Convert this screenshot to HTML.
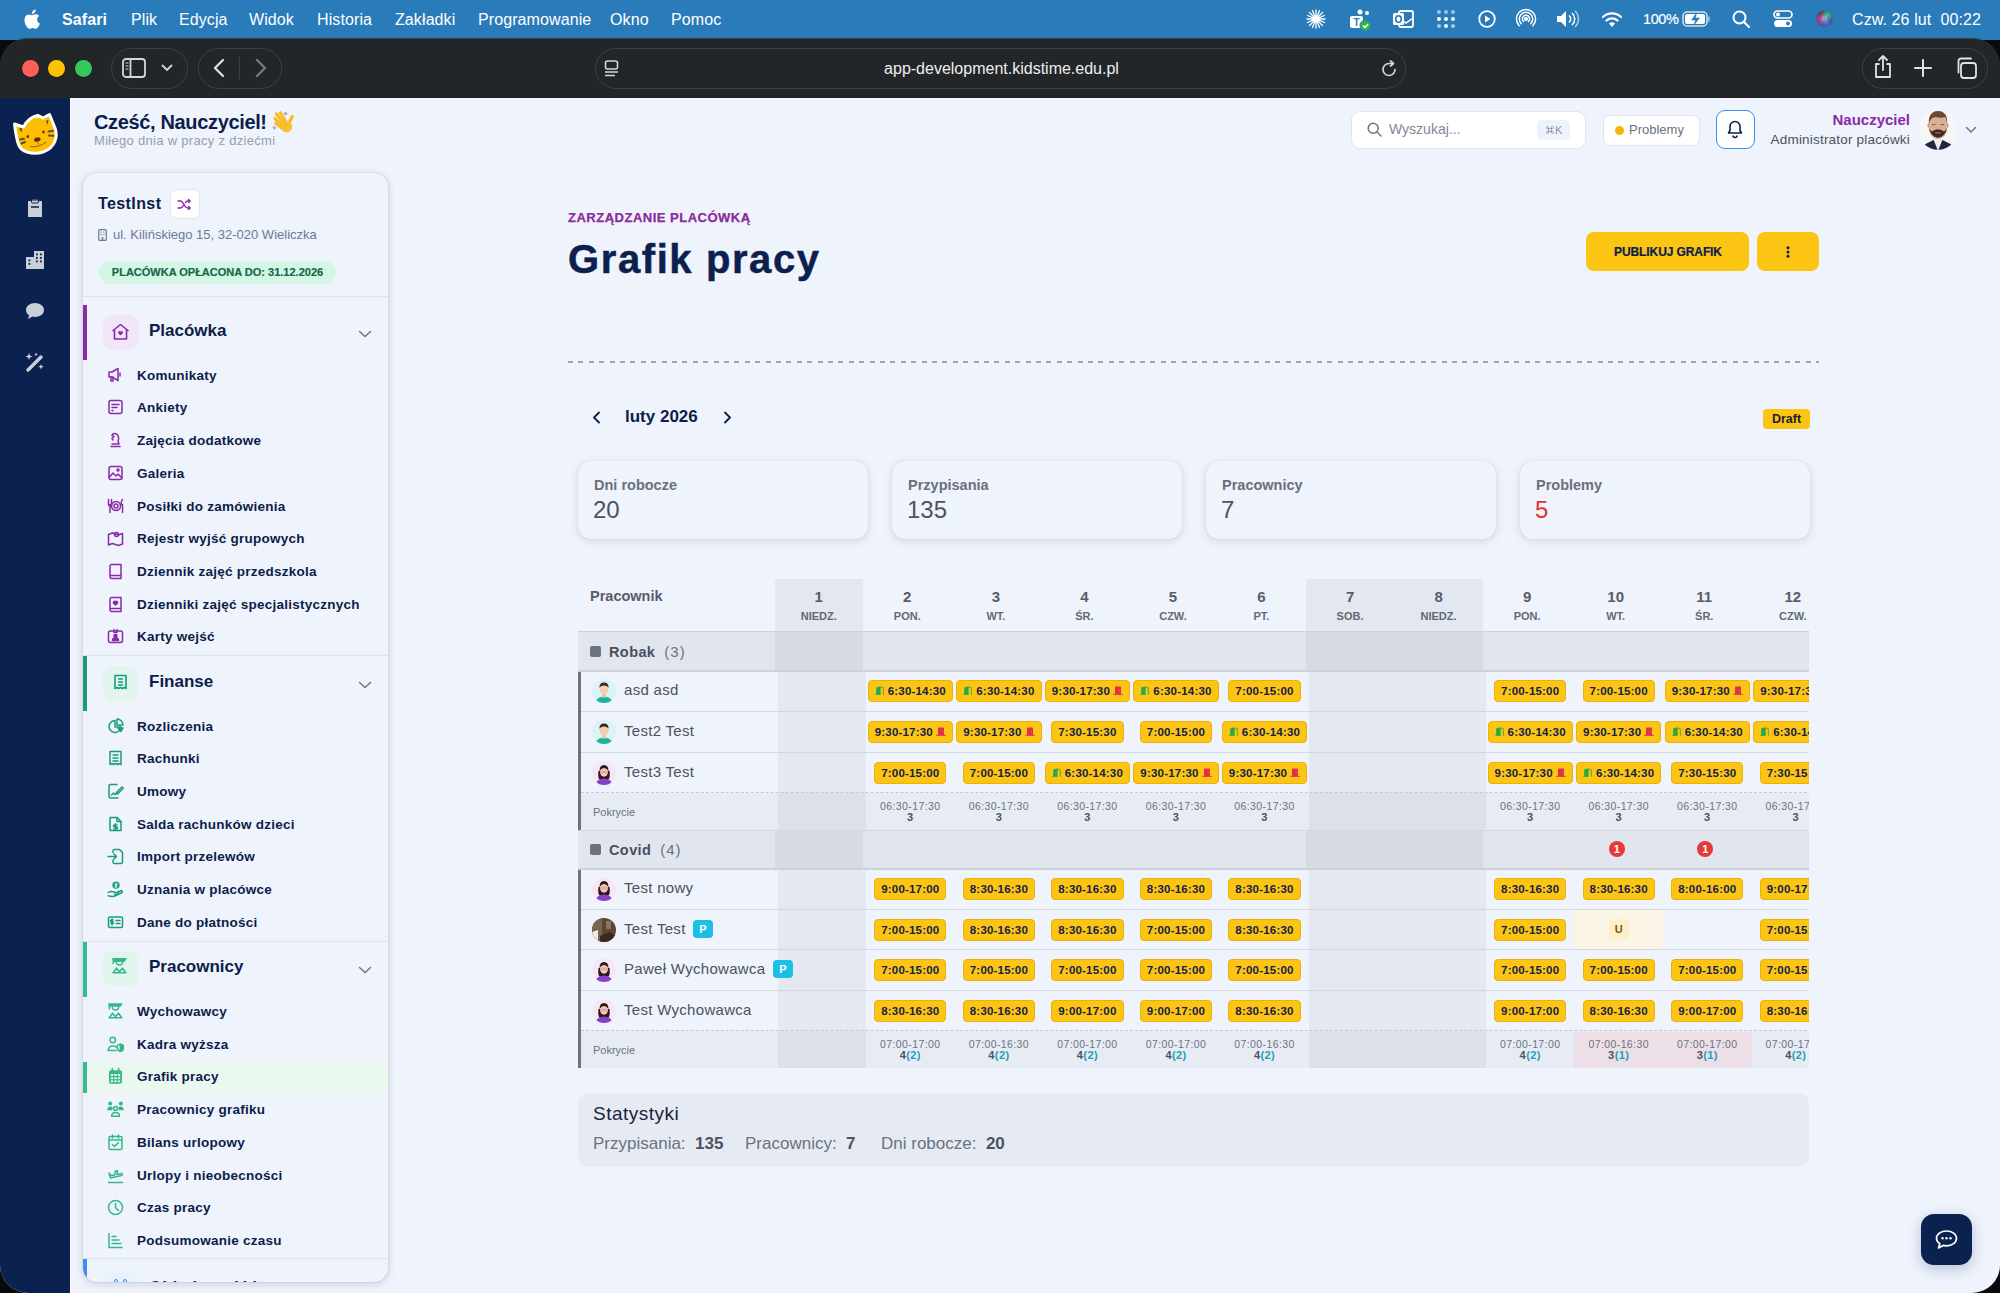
<!DOCTYPE html>
<html><head><meta charset="utf-8">
<style>
*{box-sizing:border-box;margin:0;padding:0}
html,body{width:2000px;height:1293px;overflow:hidden;background:#0a0a0a;font-family:"Liberation Sans",sans-serif}
.a{position:absolute}
svg{position:absolute;overflow:visible}
#menubar{position:absolute;left:0;top:0;width:2000px;height:40px;background:#2a7bba;color:#fff;font-size:16px}
#menubar span{position:absolute;top:11px;white-space:nowrap;letter-spacing:0.1px}
#toolbar{position:absolute;left:0;top:38px;width:2000px;height:60px;background:#232629;border-radius:28px 28px 0 0;border-top:1px solid #3a3d40}
.tl{position:absolute;width:16.5px;height:16.5px;border-radius:50%;top:60px;box-shadow:0 0 0 0.6px rgba(0,0,0,.35)}
.pill{position:absolute;top:48px;height:41px;border:1.5px solid #3a4045;border-radius:21px}
#content{position:absolute;left:0;top:98px;width:2000px;height:1195px;background:#eff3fc;border-radius:0 0 28px 28px;overflow:hidden}
#rail{position:absolute;left:0;top:0;width:71px;height:1195px;background:#0b2150;border-right:1px solid #fff}
.navy{color:#0c1d4a}
</style></head>
<body>
<div id="menubar">
  <svg style="left:23px;top:9px" width="17" height="20" viewBox="0 0 17 20"><path fill="#fff" d="M14.1 10.6c0-2.3 1.9-3.4 2-3.5-1.1-1.6-2.8-1.8-3.4-1.8-1.4-.1-2.8.9-3.5.9-.7 0-1.8-.8-3-.8C4.6 5.4 3.1 6.3 2.3 7.7c-1.7 2.9-.4 7.2 1.2 9.6.8 1.2 1.8 2.5 3 2.4 1.2 0 1.7-.8 3.1-.8 1.5 0 1.9.8 3.1.8 1.3 0 2.1-1.2 2.9-2.4.9-1.3 1.3-2.6 1.3-2.700-.1 0-2.8-1-2.8-4zM11.7 3.6c.7-.8 1.1-1.9 1-3-.9 0-2.1.6-2.8 1.4-.6.7-1.200 1.800-1 2.900 1.100.1 2.100-.500 2.800-1.300z"/></svg>
  <span style="left:62px;font-weight:bold">Safari</span>
  <span style="left:131px">Plik</span>
  <span style="left:179px">Edycja</span>
  <span style="left:249px">Widok</span>
  <span style="left:317px">Historia</span>
  <span style="left:395px">Zakładki</span>
  <span style="left:478px">Programowanie</span>
  <span style="left:610px">Okno</span>
  <span style="left:671px">Pomoc</span>
  <!-- status icons -->
  <svg style="left:1306px;top:9px" width="20" height="20" viewBox="0 0 20 20"><path d="M12.50 10.00L19.20 10.00M12.31 10.96L18.50 13.52M11.77 11.77L16.51 16.51M10.96 12.31L13.52 18.50M10.00 12.50L10.00 19.20M9.04 12.31L6.48 18.50M8.23 11.77L3.49 16.51M7.69 10.96L1.50 13.52M7.50 10.00L0.80 10.00M7.69 9.04L1.50 6.48M8.23 8.23L3.49 3.49M9.04 7.69L6.48 1.50M10.00 7.50L10.00 0.80M10.96 7.69L13.52 1.50M11.77 8.23L16.51 3.49M12.31 9.04L18.50 6.48" stroke="#fff" stroke-width="1.3" stroke-linecap="round"/><circle cx="10" cy="10" r="3" fill="#fff"/></svg>
  <svg style="left:1349px;top:8px" width="24" height="24" viewBox="0 0 24 24"><rect x="1" y="8" width="13" height="12" rx="2" fill="#fff"/><text x="4.5" y="18" font-size="10" font-weight="bold" fill="#2a7bba" font-family="Liberation Sans">T</text><circle cx="11" cy="4" r="2.5" fill="#fff"/><circle cx="18" cy="5" r="2" fill="#fff"/><circle cx="16.5" cy="17.5" r="5.5" fill="#2fb34a" stroke="#2a7bba" stroke-width="1"/><path d="M14 17.5l2 2 3.2-3.5" stroke="#fff" stroke-width="1.6" fill="none"/></svg>
  <svg style="left:1392px;top:8px" width="22" height="22" viewBox="0 0 22 22"><rect x="7" y="3" width="14" height="16" rx="1.5" fill="none" stroke="#fff" stroke-width="1.8"/><path d="M7 10l7 5 7-5" stroke="#fff" stroke-width="1.5" fill="none"/><rect x="1" y="5" width="11" height="12" rx="1.5" fill="#fff"/><ellipse cx="6.5" cy="11" rx="2.8" ry="3.3" fill="none" stroke="#2a7bba" stroke-width="1.6"/></svg>
  <svg style="left:1436px;top:9px" width="20" height="20" viewBox="0 0 20 20"><g fill="#fff"><circle cx="3" cy="3" r="2" opacity=".55"/><circle cx="10" cy="3" r="2" opacity=".55"/><circle cx="17" cy="3" r="2" opacity=".55"/><circle cx="3" cy="10" r="2"/><circle cx="10" cy="10" r="2"/><circle cx="17" cy="10" r="2"/><circle cx="3" cy="17" r="2" opacity=".6"/><circle cx="10" cy="17" r="2"/><circle cx="17" cy="17" r="2" opacity=".6"/></g></svg>
  <svg style="left:1478px;top:10px" width="18" height="18" viewBox="0 0 18 18"><circle cx="9" cy="9" r="7.8" fill="none" stroke="#fff" stroke-width="1.8"/><path d="M7 5.5v7l5.5-3.5z" fill="#fff"/></svg>
  <svg style="left:1517px;top:10px" width="18" height="18" viewBox="0 0 18 18"><g fill="none" stroke="#fff" stroke-width="1.5" stroke-linecap="round"><circle cx="9" cy="9" r="1.3" fill="#fff"/><path d="M6.5 11.5a3.6 3.6 0 1 1 5 0"/><path d="M4.3 13.7a6.7 6.7 0 1 1 9.4 0"/><path d="M2.2 15.8a9.6 9.6 0 1 1 13.6 0"/></g></svg>
  <svg style="left:1556px;top:10px" width="24" height="18" viewBox="0 0 24 18"><path d="M1 6h4l5-5v16l-5-5H1z" fill="#fff"/><g fill="none" stroke="#fff" stroke-width="1.6"><path d="M13 5.5a4.5 4.5 0 0 1 0 7"/><path d="M16 3a8 8 0 0 1 0 12"/><path d="M19 1a11 11 0 0 1 0 16" opacity=".6"/></g></svg>
  <svg style="left:1600px;top:10px" width="24" height="18" viewBox="0 0 24 18"><path d="M12 17l3-3.5a4.5 4.5 0 0 0-6 0z" fill="#fff"/><g fill="none" stroke="#fff" stroke-width="2.2" stroke-linecap="round"><path d="M6.5 10.5a8 8 0 0 1 11 0"/><path d="M3 7a13 13 0 0 1 18 0"/></g></svg>
  <span style="left:1643px;font-size:14.5px;letter-spacing:-0.4px;-webkit-text-stroke:0.2px #fff">100%</span>
  <svg style="left:1682px;top:11px" width="30" height="16" viewBox="0 0 30 16"><rect x="1" y="1" width="24" height="14" rx="4" fill="none" stroke="#fff" stroke-width="1.5" opacity=".8"/><rect x="3" y="3" width="20" height="10" rx="2" fill="#fff"/><path d="M27 5.5v5" stroke="#fff" stroke-width="1.5" opacity=".6"/><path d="M14.5 2l-5 7h4l-1.5 5 5.5-7h-4z" fill="#2a7bba" stroke="#2a7bba" stroke-width="0.5"/></svg>
  <svg style="left:1732px;top:10px" width="18" height="18" viewBox="0 0 18 18"><circle cx="7.5" cy="7.5" r="6" fill="none" stroke="#fff" stroke-width="2"/><path d="M12 12l5 5" stroke="#fff" stroke-width="2.2" stroke-linecap="round"/></svg>
  <svg style="left:1773px;top:10px" width="20" height="18" viewBox="0 0 20 18"><rect x="1" y="1" width="18" height="7" rx="3.5" fill="none" stroke="#fff" stroke-width="1.7"/><circle cx="5" cy="4.5" r="2" fill="#fff"/><rect x="1" y="10" width="18" height="7" rx="3.5" fill="#fff"/><circle cx="15" cy="13.5" r="2" fill="#2a7bba"/></svg>
  <svg style="left:1816px;top:10px" width="17" height="17" viewBox="0 0 17 17"><defs><radialGradient id="sg1" cx="30%" cy="55%" r="55%"><stop offset="0" stop-color="#e0409a"/><stop offset="1" stop-color="#e0409a" stop-opacity="0"/></radialGradient><radialGradient id="sg2" cx="70%" cy="30%" r="50%"><stop offset="0" stop-color="#40c890"/><stop offset="1" stop-color="#40c890" stop-opacity="0"/></radialGradient><radialGradient id="sg3" cx="60%" cy="75%" r="45%"><stop offset="0" stop-color="#4a7ae8"/><stop offset="1" stop-color="#4a7ae8" stop-opacity="0"/></radialGradient></defs><circle cx="8.5" cy="8.5" r="8" fill="#3a3550"/><circle cx="8.5" cy="8.5" r="8" fill="url(#sg1)"/><circle cx="8.5" cy="8.5" r="8" fill="url(#sg2)"/><circle cx="8.5" cy="8.5" r="8" fill="url(#sg3)"/><circle cx="8.5" cy="8.5" r="3" fill="#dde" opacity=".35"/></svg>
  <span style="left:1852px">Czw. 26 lut&nbsp; 00:22</span>
</div>
<div id="toolbar"></div>
<div class="tl" style="left:22px;background:#fe5f57"></div>
<div class="tl" style="left:48px;background:#fcc400"></div>
<div class="tl" style="left:75px;background:#35c759"></div>
<div class="pill" style="left:111px;width:77px"></div>
<svg style="left:122px;top:58px" width="24" height="20" viewBox="0 0 24 20"><rect x="1" y="1" width="22" height="18" rx="3" fill="none" stroke="#d5d7d9" stroke-width="1.8"/><path d="M8.5 1v18" stroke="#d5d7d9" stroke-width="1.8"/><path d="M3.5 5h3M3.5 8h3M3.5 11h3" stroke="#d5d7d9" stroke-width="1.2"/></svg>
<svg style="left:161px;top:64px" width="12" height="8" viewBox="0 0 12 8"><path d="M1.5 1.5l4.5 4.5 4.5-4.5" fill="none" stroke="#d5d7d9" stroke-width="1.8" stroke-linecap="round"/></svg>
<div class="pill" style="left:198px;width:84px"></div>
<svg style="left:213px;top:58px" width="12" height="20" viewBox="0 0 12 20"><path d="M10 2L2 10l8 8" fill="none" stroke="#e0e2e4" stroke-width="2.2" stroke-linecap="round" stroke-linejoin="round"/></svg>
<div class="a" style="left:239px;top:57px;width:1px;height:22px;background:#3a4045"></div>
<svg style="left:255px;top:58px" width="12" height="20" viewBox="0 0 12 20"><path d="M2 2l8 8-8 8" fill="none" stroke="#7a7d80" stroke-width="2.2" stroke-linecap="round" stroke-linejoin="round"/></svg>
<div class="pill" style="left:595px;width:811px"></div>
<svg style="left:604px;top:60px" width="16" height="17" viewBox="0 0 16 17"><rect x="1.5" y="1" width="12" height="8" rx="2" fill="none" stroke="#d5d7d9" stroke-width="1.6"/><path d="M1 12h13M1 15.5h10" stroke="#d5d7d9" stroke-width="1.6"/></svg>
<div class="a" style="left:0;width:2000px;text-align:center;top:60px;font-size:16px;color:#eceeef;padding-left:3px">app-development.kidstime.edu.pl</div>
<svg style="left:1380px;top:60px" width="18" height="18" viewBox="0 0 18 18"><path d="M15 9.5A6 6 0 1 1 9 3.5h3" fill="none" stroke="#d5d7d9" stroke-width="1.7" stroke-linecap="round"/><path d="M10.5 1l3 2.5-3 2.5" fill="none" stroke="#d5d7d9" stroke-width="1.7" stroke-linecap="round" stroke-linejoin="round"/></svg>
<div class="pill" style="left:1862px;width:126px"></div>
<svg style="left:1873px;top:55px" width="20" height="24" viewBox="0 0 20 24"><path d="M10 1v14M6 5l4-4 4 4" fill="none" stroke="#e0e2e4" stroke-width="1.8" stroke-linecap="round" stroke-linejoin="round"/><path d="M6.5 9H3v13h14V9h-3.5" fill="none" stroke="#e0e2e4" stroke-width="1.8" stroke-linejoin="round"/></svg>
<svg style="left:1914px;top:59px" width="18" height="18" viewBox="0 0 18 18"><path d="M9 1v16M1 9h16" stroke="#e0e2e4" stroke-width="2" stroke-linecap="round"/></svg>
<svg style="left:1955px;top:57px" width="22" height="22" viewBox="0 0 22 22"><rect x="6" y="6" width="15" height="15" rx="3" fill="none" stroke="#e0e2e4" stroke-width="1.8"/><path d="M3.5 15.5V4a2.5 2.5 0 0 1 2.5-2.5h10" fill="none" stroke="#e0e2e4" stroke-width="1.8" stroke-linecap="round"/></svg>

<div id="content">
  <div id="rail"></div>
</div>
<!-- rail icons (page coords) -->
<svg style="left:5px;top:105px" width="60" height="60" viewBox="0 0 60 60">
  <path d="M9.5 19 L18.5 22 Q24 12 32.5 10.5 L35 11.5 L38 13 L44.5 9.5 L50 23 Q52.5 30 50 36 Q47 44 38 47 Q30 49.5 22 47 Q15 45 13 38 Q11 31 9.5 19z" fill="#fdbd00" stroke="#fff" stroke-width="3" stroke-linejoin="round"/>
  <path d="M14 23.5l2.5 4 .8-4.5z" fill="#5a5030"/>
  <path d="M41 15.5l1.5 4.5 1-4.8z" fill="#5a5030"/>
  <path d="M43.5 26.5l4.5-.8M44 30.5l4.3.2" stroke="#5a5030" stroke-width="2" stroke-linecap="round"/>
  <path d="M15 34.5l4-.8M16.5 38.5l3.5-1.5" stroke="#5a5030" stroke-width="2" stroke-linecap="round"/>
  <ellipse cx="22.8" cy="31.5" rx="1.2" ry="1.6" fill="#5a2a10"/>
  <ellipse cx="38.5" cy="27" rx="1.2" ry="1.6" fill="#5a2a10"/>
  <ellipse cx="32.3" cy="34.5" rx="3.3" ry="2.1" fill="#5a2a10" transform="rotate(-12 32.3 34.5)"/>
  <path d="M25 41.5 Q33 43 41.5 37" stroke="#8a5a10" stroke-width="0.9" fill="none"/>
  <path d="M33 36.5v3.5" stroke="#8a5a10" stroke-width="0.7"/>
  <path d="M31 13.5l1.5-2.5 1 2.5" stroke="#fff" stroke-width="1" fill="none" opacity=".8"/>
</svg>
<svg style="left:26px;top:198px" width="18" height="20" viewBox="0 0 18 20"><path d="M2 3h4V1.5h6V3h4v16H2z" fill="#c9ced9"/><rect x="5.5" y="2" width="7" height="3" rx="1" fill="#c9ced9" stroke="#0b2150" stroke-width="1"/><path d="M5 9h8" stroke="#0b2150" stroke-width="1.5"/></svg>
<svg style="left:25px;top:250px" width="20" height="20" viewBox="0 0 20 20"><path d="M1 7h8V1h10v18H1z" fill="#c9ced9"/><g fill="#0b2150"><rect x="11" y="3.5" width="1.8" height="1.8"/><rect x="15" y="3.5" width="1.8" height="1.8"/><rect x="11" y="7" width="1.8" height="1.8"/><rect x="15" y="7" width="1.8" height="1.8"/><rect x="11" y="10.5" width="1.8" height="1.8"/><rect x="15" y="10.5" width="1.8" height="1.8"/><rect x="3.5" y="9.5" width="1.8" height="1.8"/><rect x="3.5" y="13" width="1.8" height="1.8"/></g></svg>
<svg style="left:25px;top:302px" width="20" height="18" viewBox="0 0 20 18"><path d="M10 1C5 1 1 4 1 8c0 2.2 1.1 4 3 5.3L3.2 17 7.5 14.6C8.3 14.8 9.1 15 10 15c5 0 9-3 9-7s-4-7-9-7z" fill="#c9ced9"/></svg>
<svg style="left:24px;top:351px" width="22" height="22" viewBox="0 0 22 22"><path d="M4 19L17 6" stroke="#c9ced9" stroke-width="3.5" stroke-linecap="round"/><path d="M5 2l1 2.5L8.5 5.5 6 6.5 5 9 4 6.5 1.5 5.5 4 4.5z" fill="#c9ced9"/><path d="M17 13l.8 2 2 .8-2 .8-.8 2-.8-2-2-.8 2-.8z" fill="#c9ced9"/><path d="M12 1.5l.6 1.4 1.4.6-1.4.6-.6 1.4-.6-1.4-1.4-.6 1.4-.6z" fill="#c9ced9"/></svg>
<!-- header greeting -->
<div class="a navy" style="left:94px;top:111px;font-size:20px;font-weight:bold;white-space:nowrap;letter-spacing:-0.35px">Cześć, Nauczyciel!</div>
<svg style="left:270px;top:110px" width="24" height="24" viewBox="0 0 24 24"><g stroke="#f7bd26" stroke-linecap="round"><path d="M14.5 14.5L6.4 4" stroke-width="3.2"/><path d="M16.5 12.5L10.3 2.8" stroke-width="3.2"/><path d="M13 16.5L4.9 8.6" stroke-width="3.2"/><path d="M12.5 18.5L5.7 13.4" stroke-width="3"/><path d="M18 15L22.3 6.5" stroke-width="3.2"/></g><ellipse cx="16.8" cy="17" rx="5.6" ry="5.2" transform="rotate(-40 16.8 17)" fill="#f8c02a"/><g stroke="#8a8f99" stroke-width="1.1" stroke-linecap="round"><path d="M14.3 3.2l1.2 1.6M15.7 2.4l1.2 1.6"/><path d="M3.2 17.5l1.3 1.5M4.3 16.5l1.3 1.5"/></g></svg>
<div class="a" style="left:94px;top:133px;font-size:13px;color:#979dab;white-space:nowrap;letter-spacing:0.3px">Miłego dnia w pracy z dziećmi</div>


<div class="a" style="left:1351px;top:111px;width:235px;height:38px;background:#fff;border:1px solid #dfe4ee;border-radius:9px"></div>
<svg style="left:1367px;top:122px" width="15" height="15" viewBox="0 0 15 15"><circle cx="6.2" cy="6.2" r="5" fill="none" stroke="#6b7488" stroke-width="1.5"/><path d="M10 10l4 4" stroke="#6b7488" stroke-width="1.5" stroke-linecap="round"/></svg>
<div class="a" style="left:1389px;top:121px;font-size:14px;color:#7f889b;white-space:nowrap">Wyszukaj...</div>
<div class="a" style="left:1537px;top:120px;width:33px;height:20px;background:#eef2fa;border-radius:5px;font-size:11px;color:#8a93a6;line-height:20px;padding-left:18px">K</div>
<svg style="left:1545px;top:125px" width="10" height="10" viewBox="0 0 10 10"><path d="M3.5 3.5h3v3h-3zM3.5 3.5v-1a1 1 0 1 0-1 1zM6.5 3.5v-1a1 1 0 1 1 1 1zM3.5 6.5v1a1 1 0 1 1-1-1zM6.5 6.5v1a1 1 0 1 0 1-1z" fill="none" stroke="#8a93a6" stroke-width=".9"/></svg>
<div class="a" style="left:1603px;top:115px;width:97px;height:31px;background:#fff;border:1px solid #dfe4ee;border-radius:7px"></div>
<div class="a" style="left:1615px;top:126px;width:9px;height:9px;border-radius:50%;background:#f2b50a"></div>
<div class="a" style="left:1629px;top:122px;font-size:13px;color:#6b7280;white-space:nowrap">Problemy</div>
<div class="a" style="left:1716px;top:110px;width:39px;height:39px;background:#fff;border:1.5px solid #3d8ef0;border-radius:9px"></div>
<svg style="left:1727px;top:120px" width="16" height="18" viewBox="0 0 16 18"><path d="M8 1.5a5 5 0 0 0-5 5v4L1.5 13h13L13 10.5v-4a5 5 0 0 0-5-5z" fill="none" stroke="#0c1d4a" stroke-width="1.6" stroke-linejoin="round"/><path d="M6 15.5a2 2 0 0 0 4 0" fill="none" stroke="#0c1d4a" stroke-width="1.6"/></svg>
<div class="a" style="left:1700px;width:210px;text-align:right;top:111px;font-size:15px;font-weight:bold;color:#8a2aa8;white-space:nowrap">Nauczyciel</div>
<div class="a" style="left:1700px;width:210px;text-align:right;top:132px;font-size:13.5px;color:#4b5260;white-space:nowrap;letter-spacing:0.2px">Administrator placówki</div>
<svg style="left:1918px;top:110px" width="40" height="40" viewBox="0 0 40 40"><defs><clipPath id="avc"><circle cx="20" cy="20" r="19.7"/></clipPath></defs><g clip-path="url(#avc)"><rect width="40" height="40" fill="#f6f6f7"/><path d="M4 40l3.5-6 8-4h9l8 4 3.5 6z" fill="#1f2740"/><path d="M15.5 29.5h9L20 41z" fill="#f1ecea"/><ellipse cx="10.8" cy="15.5" rx="1.3" ry="2.3" fill="#c99479"/><ellipse cx="29.2" cy="15.5" rx="1.3" ry="2.3" fill="#c99479"/><path d="M11 12c0-7 3.5-10.5 9-10.5s9 3.5 9 10.5v6c0 6-3.5 11-9 11s-9-5-9-11z" fill="#dcae93"/><path d="M10.8 13.5c-.3-8 3-12.6 9.2-12.6 6.5 0 9.6 4.6 9.2 12.6-.8-3.2-1.3-5.5-2.2-6.5-2 .8-5.5 1-8.5.3-2.8-.6-4.8.6-5.8 2.200-.8 1.300-1.500 2.500-1.900 4z" fill="#6a4a34"/><path d="M11.2 17.5c.2 2.600.800 4.600 2.300 6.600 1.300 1.800 3.700 3.600 6.500 3.600s5.200-1.800 6.500-3.600c1.500-2 2.100-4 2.300-6.600-.600 2.200-1.500 3.500-3 3.900-1.500-1.300-3.500-1.800-5.800-1.800s-4.300.500-5.800 1.800c-1.500-.400-2.400-1.700-3-3.900z" fill="#3b2a1f"/><path d="M17.3 22.6q2.700.9 5.400 0" stroke="#b9837a" stroke-width="1" fill="none"/><path d="M14 14.6h3.400M22.600 14.600h3.400" stroke="#6a5040" stroke-width=".9"/></g></svg>
<svg style="left:1965px;top:126px" width="12" height="8" viewBox="0 0 12 8"><path d="M1.5 1.5l4.5 4.5 4.5-4.5" fill="none" stroke="#6b7488" stroke-width="1.5" stroke-linecap="round"/></svg>

<div class="a" style="left:83px;top:173px;width:305px;height:1109px;background:#eff3fc;border-radius:14px;box-shadow:0 2px 9px rgba(30,40,80,.17), 0 0 2px rgba(30,40,80,.2);overflow:hidden">
<div class="a" style="left:0;top:123px;width:305px;height:1px;background:#dde2ec"></div>
<div class="a" style="left:0;top:482px;width:305px;height:1px;background:#dde2ec"></div>
<div class="a" style="left:0;top:768px;width:305px;height:1px;background:#dde2ec"></div>
<div class="a" style="left:0;top:1085px;width:305px;height:1px;background:#dde2ec"></div>
<div class="a" style="left:0;top:132px;width:4px;height:55px;background:#8a2aa8"></div>
<div class="a" style="left:0;top:483px;width:4px;height:55px;background:#199a78"></div>
<div class="a" style="left:0;top:769px;width:4px;height:55px;background:#34bb8a"></div>
<div class="a" style="left:0;top:889px;width:305px;height:31px;background:#eaf8f0"></div>
<div class="a" style="left:0;top:889px;width:4px;height:31px;background:#34bb8a"></div>
<div class="a" style="left:0;top:1086px;width:4px;height:30px;background:#3b8ef0"></div>
<div class="a" style="left:20px;top:1098px;width:35px;height:35px;background:#e6f2fd;border-radius:9px"></div>
<div class="a" style="left:66px;top:1105px;font-size:17px;font-weight:bold;color:#0c1d4a;white-space:nowrap">Obiady wyjść</div><div class="a" style="left:31px;top:1106px;width:4px;height:4px;border-radius:50%;border:1.3px solid #3b8ef0"></div><div class="a" style="left:40px;top:1106px;width:4px;height:4px;border-radius:50%;border:1.3px solid #3b8ef0"></div>
</div>


<div class="a" style="left:98px;top:195px;font-size:16px;font-weight:bold;color:#0c1d4a;white-space:nowrap;letter-spacing:0.4px">TestInst</div>
<div class="a" style="left:170px;top:189px;width:30px;height:30px;background:#fff;border:1px solid #e3e6ee;border-radius:7px"></div>
<svg style="left:177px;top:198px" width="15" height="13" viewBox="0 0 15 13"><g fill="none" stroke="#8a2aa8" stroke-width="1.4" stroke-linecap="round" stroke-linejoin="round"><path d="M1 3h2.5c3 0 4 7 7 7H13"/><path d="M1 10h2.5c1.4 0 2.3-1.3 3-2.8M8.5 4.5C9 3.8 9.6 3 10.5 3H13"/><path d="M11.5 1.5L13 3l-1.5 1.5M11.5 8.5L13 10l-1.5 1.5"/></g></svg>
<svg style="left:98px;top:229px" width="9" height="12" viewBox="0 0 9 12"><rect x="0.7" y="0.7" width="7.6" height="10.6" rx="1" fill="none" stroke="#6b7a99" stroke-width="1.2"/><g fill="#6b7a99"><rect x="2.3" y="2.5" width="1.2" height="1.2"/><rect x="5.3" y="2.5" width="1.2" height="1.2"/><rect x="2.3" y="5" width="1.2" height="1.2"/><rect x="5.3" y="5" width="1.2" height="1.2"/><rect x="3.7" y="8" width="1.6" height="3.3"/></g></svg>
<div class="a" style="left:113px;top:227px;font-size:13px;color:#6b7a99;white-space:nowrap">ul. Kilińskiego 15, 32-020 Wieliczka</div>
<div class="a" style="left:99px;top:261px;width:237px;height:23px;background:#d4f6e4;border-radius:12px;font-size:11px;font-weight:bold;color:#146b45;line-height:23px;text-align:center;white-space:nowrap;-webkit-text-stroke:0.2px #146b45">PLACÓWKA OPŁACONA DO: 31.12.2026</div>

<div class="a" style="left:103px;top:315px;width:35px;height:35px;background:#f3e5f8;border-radius:9px"></div>
<svg style="left:111px;top:323px" width="19" height="18" viewBox="0 0 19 18"><g fill="none" stroke="#8a2aa8" stroke-width="1.6" stroke-linejoin="round"><path d="M1.5 8L9.5 1.5 17.5 8"/><path d="M3.5 6.5V16h12V6.5"/></g><path d="M9.5 12.5l-2.3-2.2a1.3 1.3 0 0 1 2.3-1.5 1.3 1.3 0 0 1 2.3 1.5z" fill="#8a2aa8"/></svg>
<div class="a" style="left:149px;top:321px;font-size:17px;font-weight:bold;color:#0c1d4a;white-space:nowrap">Placówka</div>
<svg style="left:358px;top:330px" width="14" height="8" viewBox="0 0 14 8"><path d="M1.5 1.5l5.5 5 5.5-5" fill="none" stroke="#6b7488" stroke-width="1.5" stroke-linecap="round"/></svg>
<svg style="left:107px;top:367px" width="17" height="16" viewBox="0 0 17 16"><g fill="none" stroke="#8a2aa8" stroke-width="1.5" stroke-linecap="round" stroke-linejoin="round"><path d="M2 5h3l6-3.5v12L5 10H2z"/><path d="M4 10v4h2v-4"/><path d="M13 6v3"/></g></svg>
<div class="a" style="left:137px;top:368px;font-size:13.5px;font-weight:bold;color:#0c1d4a;white-space:nowrap;letter-spacing:0.25px">Komunikaty</div>
<svg style="left:107px;top:399px" width="17" height="16" viewBox="0 0 17 16"><g fill="none" stroke="#8a2aa8" stroke-width="1.5" stroke-linecap="round" stroke-linejoin="round"><rect x="2" y="1.5" width="13" height="13" rx="2"/><path d="M5 5.5h7M5 8.5h5M5 11.5h1"/></g></svg>
<div class="a" style="left:137px;top:400px;font-size:13.5px;font-weight:bold;color:#0c1d4a;white-space:nowrap;letter-spacing:0.25px">Ankiety</div>
<svg style="left:107px;top:432px" width="17" height="16" viewBox="0 0 17 16"><g fill="none" stroke="#8a2aa8" stroke-width="1.5" stroke-linecap="round" stroke-linejoin="round"><path d="M4 14.5h9M5 12h7l-1-3c1.5-2 .5-7-3-7.5-2-.2-3 1-3 2l2 1-2 2 1 1.5"/></g></svg>
<div class="a" style="left:137px;top:433px;font-size:13.5px;font-weight:bold;color:#0c1d4a;white-space:nowrap;letter-spacing:0.25px">Zajęcia dodatkowe</div>
<svg style="left:107px;top:465px" width="17" height="16" viewBox="0 0 17 16"><g fill="none" stroke="#8a2aa8" stroke-width="1.5" stroke-linecap="round" stroke-linejoin="round"><rect x="2" y="1.5" width="13" height="13" rx="2"/><path d="M2.5 12l3.5-4 3 3 2-2 3.5 3.5"/><circle cx="11" cy="5" r="1"/></g></svg>
<div class="a" style="left:137px;top:466px;font-size:13.5px;font-weight:bold;color:#0c1d4a;white-space:nowrap;letter-spacing:0.25px">Galeria</div>
<svg style="left:107px;top:498px" width="17" height="16" viewBox="0 0 17 16"><g fill="none" stroke="#8a2aa8" stroke-width="1.5" stroke-linecap="round" stroke-linejoin="round"><circle cx="9" cy="8" r="4.5"/><circle cx="9" cy="8" r="2"/><path d="M1.5 1.5v5a1.5 1.5 0 0 0 3 0v-5M3 6.5v8M15.5 1.5c-1 1-1.5 3-1.5 5h1.5v8"/></g></svg>
<div class="a" style="left:137px;top:499px;font-size:13.5px;font-weight:bold;color:#0c1d4a;white-space:nowrap;letter-spacing:0.25px">Posiłki do zamówienia</div>
<svg style="left:107px;top:530px" width="17" height="16" viewBox="0 0 17 16"><g fill="none" stroke="#8a2aa8" stroke-width="1.5" stroke-linecap="round" stroke-linejoin="round"><path d="M1.5 4.5l4-1.5 6 2 4-1.5v10.5l-4 1.5-6-2-4 1.5z"/><circle cx="9.5" cy="4.5" r="2"/></g></svg>
<div class="a" style="left:137px;top:531px;font-size:13.5px;font-weight:bold;color:#0c1d4a;white-space:nowrap;letter-spacing:0.25px">Rejestr wyjść grupowych</div>
<svg style="left:107px;top:563px" width="17" height="16" viewBox="0 0 17 16"><g fill="none" stroke="#8a2aa8" stroke-width="1.5" stroke-linecap="round" stroke-linejoin="round"><path d="M3 13V3a1.5 1.5 0 0 1 1.5-1.5H14v11H4.5A1.5 1.5 0 0 0 3 14a1.5 1.5 0 0 0 1.5 1.5H14v-3"/></g></svg>
<div class="a" style="left:137px;top:564px;font-size:13.5px;font-weight:bold;color:#0c1d4a;white-space:nowrap;letter-spacing:0.25px">Dziennik zajęć przedszkola</div>
<svg style="left:107px;top:596px" width="17" height="16" viewBox="0 0 17 16"><g fill="none" stroke="#8a2aa8" stroke-width="1.5" stroke-linecap="round" stroke-linejoin="round"><path d="M3 13V3a1.5 1.5 0 0 1 1.5-1.5H14v11H4.5A1.5 1.5 0 0 0 3 14a1.5 1.5 0 0 0 1.5 1.5H14v-3"/><path d="M8.5 9l-2-1.8a1.1 1.1 0 0 1 2-1.2 1.1 1.1 0 0 1 2 1.2z" fill="#8a2aa8"/></g></svg>
<div class="a" style="left:137px;top:597px;font-size:13.5px;font-weight:bold;color:#0c1d4a;white-space:nowrap;letter-spacing:0.25px">Dzienniki zajęć specjalistycznych</div>
<svg style="left:107px;top:628px" width="17" height="16" viewBox="0 0 17 16"><g fill="none" stroke="#8a2aa8" stroke-width="1.5" stroke-linecap="round" stroke-linejoin="round"><rect x="1.5" y="3" width="14" height="11.5" rx="2"/><path d="M7 1.5v3h3v-3"/><circle cx="8.5" cy="8" r="1.5" fill="#8a2aa8"/><path d="M5.5 12.5c0-1.6 1.3-2.5 3-2.5s3 .9 3 2.5z" fill="#8a2aa8"/></g></svg>
<div class="a" style="left:137px;top:629px;font-size:13.5px;font-weight:bold;color:#0c1d4a;white-space:nowrap;letter-spacing:0.25px">Karty wejść</div>
<div class="a" style="left:103px;top:666px;width:35px;height:35px;background:#e2f4ee;border-radius:9px"></div>
<svg style="left:112px;top:674px" width="17" height="17" viewBox="0 0 17 17"><g fill="none" stroke="#1b9d79" stroke-width="1.6" stroke-linejoin="round"><path d="M3 1.5h11v13l-1.8-1-1.8 1-1.9-1-1.8 1-1.9-1L3 14.5z"/><path d="M6 5h5M6 8h5M6 11h5"/></g></svg>
<div class="a" style="left:149px;top:672px;font-size:17px;font-weight:bold;color:#0c1d4a;white-space:nowrap">Finanse</div>
<svg style="left:358px;top:681px" width="14" height="8" viewBox="0 0 14 8"><path d="M1.5 1.5l5.5 5 5.5-5" fill="none" stroke="#6b7488" stroke-width="1.5" stroke-linecap="round"/></svg>
<svg style="left:107px;top:718px" width="17" height="16" viewBox="0 0 17 16"><g fill="none" stroke="#1b9d79" stroke-width="1.5" stroke-linecap="round" stroke-linejoin="round"><path d="M8 2.5A6 6 0 1 0 14 9H8z"/><path d="M10 1v6h6A6 6 0 0 0 10 1z"/><path d="M11 10l3 3.5 2-3.5z" fill="#1b9d79"/></g></svg>
<div class="a" style="left:137px;top:719px;font-size:13.5px;font-weight:bold;color:#0c1d4a;white-space:nowrap;letter-spacing:0.25px">Rozliczenia</div>
<svg style="left:107px;top:750px" width="17" height="16" viewBox="0 0 17 16"><g fill="none" stroke="#1b9d79" stroke-width="1.5" stroke-linecap="round" stroke-linejoin="round"><path d="M3 1.5h11v13l-1.8-1-1.8 1-1.9-1-1.8 1-1.9-1L3 14.5z"/><path d="M6 5h5M6 8h5M6 11h5"/></g></svg>
<div class="a" style="left:137px;top:751px;font-size:13.5px;font-weight:bold;color:#0c1d4a;white-space:nowrap;letter-spacing:0.25px">Rachunki</div>
<svg style="left:107px;top:783px" width="17" height="16" viewBox="0 0 17 16"><g fill="none" stroke="#1b9d79" stroke-width="1.5" stroke-linecap="round" stroke-linejoin="round"><path d="M10 1.5H3.5a1.5 1.5 0 0 0-1.5 1.5v10.5a1.5 1.5 0 0 0 1.5 1.5H11"/><path d="M4.5 12l2-2 1.5 1.5 2-2"/><path d="M9.5 9.5l5.5-5.5 1.3 1.3-5.5 5.5H9.5z"/></g></svg>
<div class="a" style="left:137px;top:784px;font-size:13.5px;font-weight:bold;color:#0c1d4a;white-space:nowrap;letter-spacing:0.25px">Umowy</div>
<svg style="left:107px;top:816px" width="17" height="16" viewBox="0 0 17 16"><g fill="none" stroke="#1b9d79" stroke-width="1.5" stroke-linecap="round" stroke-linejoin="round"><path d="M3 1.5h7l4 4v9H3z"/><path d="M10 1.5v4h4"/><path d="M10 9H7.5a1 1 0 0 0 0 2h2a1 1 0 0 1 0 2H7M8.5 7.8v6.5"/></g></svg>
<div class="a" style="left:137px;top:817px;font-size:13.5px;font-weight:bold;color:#0c1d4a;white-space:nowrap;letter-spacing:0.25px">Salda rachunków dzieci</div>
<svg style="left:107px;top:848px" width="17" height="16" viewBox="0 0 17 16"><g fill="none" stroke="#1b9d79" stroke-width="1.5" stroke-linecap="round" stroke-linejoin="round"><path d="M6 4.5V3a1.5 1.5 0 0 1 1.5-1.5h5l3 3v9.5a1.5 1.5 0 0 1-1.5 1.5h-6.5A1.5 1.5 0 0 1 6 13.5v-1.5"/><path d="M1 8.5h8.5M7 6l2.5 2.5L7 11"/></g></svg>
<div class="a" style="left:137px;top:849px;font-size:13.5px;font-weight:bold;color:#0c1d4a;white-space:nowrap;letter-spacing:0.25px">Import przelewów</div>
<svg style="left:107px;top:881px" width="17" height="16" viewBox="0 0 17 16"><g fill="none" stroke="#1b9d79" stroke-width="1.5" stroke-linecap="round" stroke-linejoin="round"><circle cx="9" cy="4.2" r="3.6" fill="#1b9d79" stroke="none"/><path d="M9 2.2v4M10.2 3H8.5a.8.8 0 0 0 0 1.5h1a.8.8 0 0 1 0 1.5H7.8" stroke="#eef3fc" stroke-width=".9"/><path d="M1.2 11.5c1.5-1 3-1.3 4.5-.8l2.8.8h2a1 1 0 0 1 0 2H7.5"/><path d="M1.2 14.8c2 .6 4 .8 6 .5l7.5-3.5a1.1 1.1 0 0 0-1-2L10.5 11.3"/></g></svg>
<div class="a" style="left:137px;top:882px;font-size:13.5px;font-weight:bold;color:#0c1d4a;white-space:nowrap;letter-spacing:0.25px">Uznania w placówce</div>
<svg style="left:107px;top:914px" width="17" height="16" viewBox="0 0 17 16"><g fill="none" stroke="#1b9d79" stroke-width="1.5" stroke-linecap="round" stroke-linejoin="round"><rect x="1.5" y="3" width="14" height="10.5" rx="1.5"/><path d="M9 6.5h4M9 9.5h4M6 6h-1.5a.9.9 0 0 0 0 1.8h1a.9.9 0 0 1 0 1.8H4M5 5v6"/></g></svg>
<div class="a" style="left:137px;top:915px;font-size:13.5px;font-weight:bold;color:#0c1d4a;white-space:nowrap;letter-spacing:0.25px">Dane do płatności</div>
<div class="a" style="left:103px;top:951px;width:35px;height:35px;background:#e0f6ec;border-radius:9px"></div>
<svg style="left:111px;top:958px" width="17" height="17" viewBox="0 0 17 17"><g fill="none" stroke="#35b98b" stroke-width="1.6" stroke-linejoin="round"><path d="M1.8 .9h13l-1.6 2.2H3.4z" fill="#35b98b"/><path d="M2.3 1.5v4.5"/><path d="M5.2 3.6a3.3 3.4 0 0 0 6.6 0"/><path d="M2.2 14.8l3.3-4.6 3 3.6 3-3.6 3.3 4.6z"/></g></svg>
<div class="a" style="left:149px;top:957px;font-size:17px;font-weight:bold;color:#0c1d4a;white-space:nowrap">Pracownicy</div>
<svg style="left:358px;top:966px" width="14" height="8" viewBox="0 0 14 8"><path d="M1.5 1.5l5.5 5 5.5-5" fill="none" stroke="#6b7488" stroke-width="1.5" stroke-linecap="round"/></svg>
<svg style="left:107px;top:1003px" width="17" height="16" viewBox="0 0 17 16"><g fill="none" stroke="#35b98b" stroke-width="1.5" stroke-linecap="round" stroke-linejoin="round"><path d="M1.8 .9h13l-1.6 2.2H3.4z" fill="#35b98b"/><path d="M2.3 1.5v4.5"/><path d="M5.2 3.6a3.3 3.4 0 0 0 6.6 0"/><path d="M2.2 14.8l3.3-4.6 3 3.6 3-3.6 3.3 4.6z"/></g></svg>
<div class="a" style="left:137px;top:1004px;font-size:13.5px;font-weight:bold;color:#0c1d4a;white-space:nowrap;letter-spacing:0.25px">Wychowawcy</div>
<svg style="left:107px;top:1036px" width="17" height="16" viewBox="0 0 17 16"><g fill="none" stroke="#35b98b" stroke-width="1.5" stroke-linecap="round" stroke-linejoin="round"><circle cx="5.8" cy="4" r="2.7"/><path d="M1.2 14.5c0-2.8 2.2-4.6 4.8-4.6 1.4 0 2.6.4 3.5 1.2M1.2 14.5h7.8"/><path d="M13.3 8.3l3 1.1v2.3c0 2-1.3 3.1-3 3.7-1.7-.6-3-1.7-3-3.7V9.4z"/><path d="M13.3 8.3v7.1c1.7-.6 3-1.7 3-3.7V9.4z" fill="#35b98b"/></g></svg>
<div class="a" style="left:137px;top:1037px;font-size:13.5px;font-weight:bold;color:#0c1d4a;white-space:nowrap;letter-spacing:0.25px">Kadra wyższa</div>
<svg style="left:107px;top:1068px" width="17" height="16" viewBox="0 0 17 16"><g fill="none" stroke="#35b98b" stroke-width="1.5" stroke-linecap="round" stroke-linejoin="round"><rect x="2" y="2.3" width="13" height="13.4" rx="2" fill="#35b98b" stroke="none"/><path d="M5.3 .6v3M11.7 .6v3" stroke-width="1.5"/><g fill="#eaf8f0" stroke="none"><rect x="3.8" y="6" width="2.4" height="2"/><rect x="7.3" y="6" width="2.4" height="2"/><rect x="10.8" y="6" width="2.4" height="2"/><rect x="3.8" y="9.2" width="2.4" height="2"/><rect x="7.3" y="9.2" width="2.4" height="2"/><rect x="10.8" y="9.2" width="2.4" height="2"/><rect x="3.8" y="12.4" width="2.4" height="1.8"/><rect x="7.3" y="12.4" width="2.4" height="1.8"/><rect x="10.8" y="12.4" width="2.4" height="1.8"/></g></g></svg>
<div class="a" style="left:137px;top:1069px;font-size:13.5px;font-weight:bold;color:#0c1d4a;white-space:nowrap;letter-spacing:0.25px">Grafik pracy</div>
<svg style="left:107px;top:1101px" width="17" height="16" viewBox="0 0 17 16"><g fill="none" stroke="#35b98b" stroke-width="1.5" stroke-linecap="round" stroke-linejoin="round"><circle cx="8.5" cy="7.5" r="2"/><circle cx="3.2" cy="2.6" r="2" fill="#35b98b" stroke="none"/><circle cx="13.8" cy="2.6" r="2" fill="#35b98b" stroke="none"/><path d="M4.6 15.2c0-2.3 1.7-3.8 3.9-3.8s3.9 1.5 3.9 3.8z"/><path d="M.2 9.3c0-2.2 1.3-3.7 3-3.7 1.1 0 2 .5 2.5 1.3L5 9.3z" fill="#35b98b" stroke="none"/><path d="M16.8 9.3c0-2.2-1.3-3.7-3-3.7-1.1 0-2 .5-2.5 1.3l.7 2.4z" fill="#35b98b" stroke="none"/></g></svg>
<div class="a" style="left:137px;top:1102px;font-size:13.5px;font-weight:bold;color:#0c1d4a;white-space:nowrap;letter-spacing:0.25px">Pracownicy grafiku</div>
<svg style="left:107px;top:1134px" width="17" height="16" viewBox="0 0 17 16"><g fill="none" stroke="#35b98b" stroke-width="1.5" stroke-linecap="round" stroke-linejoin="round"><rect x="2" y="2.5" width="13" height="13" rx="1.5"/><path d="M5.5 1v3M11.5 1v3M2 6h13M5.5 10.5l2 2 4-4"/></g></svg>
<div class="a" style="left:137px;top:1135px;font-size:13.5px;font-weight:bold;color:#0c1d4a;white-space:nowrap;letter-spacing:0.25px">Bilans urlopowy</div>
<svg style="left:107px;top:1167px" width="17" height="16" viewBox="0 0 17 16"><g fill="none" stroke="#35b98b" stroke-width="1.5" stroke-linecap="round" stroke-linejoin="round"><path d="M1.5 15.5h14"/><path d="M2 6l2 2.5 3.5-.5 1-4 2-.5-.5 4L14 6.5c1.5-.3 2 1.5.5 2L3.5 11z"/></g></svg>
<div class="a" style="left:137px;top:1168px;font-size:13.5px;font-weight:bold;color:#0c1d4a;white-space:nowrap;letter-spacing:0.25px">Urlopy i nieobecności</div>
<svg style="left:107px;top:1199px" width="17" height="16" viewBox="0 0 17 16"><g fill="none" stroke="#35b98b" stroke-width="1.5" stroke-linecap="round" stroke-linejoin="round"><circle cx="8.5" cy="8.5" r="7"/><path d="M8.5 4.5v4l3 3"/></g></svg>
<div class="a" style="left:137px;top:1200px;font-size:13.5px;font-weight:bold;color:#0c1d4a;white-space:nowrap;letter-spacing:0.25px">Czas pracy</div>
<svg style="left:107px;top:1232px" width="17" height="16" viewBox="0 0 17 16"><g fill="none" stroke="#35b98b" stroke-width="1.5" stroke-linecap="round" stroke-linejoin="round"><path d="M2 1.5v14h13"/><path d="M5 4.5h4M5 8h7M5 11.5h9"/></g></svg>
<div class="a" style="left:137px;top:1233px;font-size:13.5px;font-weight:bold;color:#0c1d4a;white-space:nowrap;letter-spacing:0.25px">Podsumowanie czasu</div>
<div class="a" style="left:568px;top:210px;font-size:13px;font-weight:bold;color:#8a2a9e;white-space:nowrap;letter-spacing:0.5px;-webkit-text-stroke:0.25px #8a2a9e">ZARZĄDZANIE PLACÓWKĄ</div>
<div class="a" style="left:568px;top:237px;font-size:40px;font-weight:bold;color:#0c1f4d;white-space:nowrap;letter-spacing:1.6px;-webkit-text-stroke:0.5px #0c1f4d">Grafik pracy</div>
<div class="a" style="left:1586px;top:232px;width:163px;height:39px;background:#fcc513;border-radius:8px;font-size:12px;font-weight:bold;color:#0c1d4a;text-align:center;line-height:40px;letter-spacing:-0.1px;padding-left:1px;-webkit-text-stroke:0.2px #0c1d4a">PUBLIKUJ GRAFIK</div>
<div class="a" style="left:1757px;top:232px;width:62px;height:39px;background:#fcc513;border-radius:8px"></div>
<svg style="left:1786px;top:246px" width="4" height="12" viewBox="0 0 4 12"><circle cx="2" cy="1.8" r="1.5" fill="#0c1d4a"/><circle cx="2" cy="6" r="1.5" fill="#0c1d4a"/><circle cx="2" cy="10.2" r="1.5" fill="#0c1d4a"/></svg>
<div class="a" style="left:568px;top:361px;width:1251px;height:2px;background:repeating-linear-gradient(90deg,#9aa5c0 0 5px,transparent 5px 10.4px)"></div>
<svg style="left:592px;top:411px" width="9" height="13" viewBox="0 0 9 13"><path d="M7 1.5L2 6.5l5 5" fill="none" stroke="#0c1d4a" stroke-width="1.8" stroke-linecap="round" stroke-linejoin="round"/></svg>
<div class="a" style="left:625px;top:407px;font-size:17px;font-weight:bold;color:#0c1d4a;white-space:nowrap">luty 2026</div>
<svg style="left:723px;top:411px" width="9" height="13" viewBox="0 0 9 13"><path d="M2 1.5l5 5-5 5" fill="none" stroke="#0c1d4a" stroke-width="1.8" stroke-linecap="round" stroke-linejoin="round"/></svg>
<div class="a" style="left:1763px;top:409px;width:47px;height:20px;background:#fcc513;border-radius:4px;font-size:12.5px;font-weight:bold;color:#1a1f2e;text-align:center;line-height:20px">Draft</div>
<div class="a" style="left:578px;top:461px;width:290px;height:78px;background:#eff3fc;border-radius:13px;box-shadow:0 2px 8px rgba(40,50,90,.14),0 0 1px rgba(40,50,90,.2)"></div>
<div class="a" style="left:594px;top:477px;font-size:14.5px;color:#5b6270;white-space:nowrap;font-weight:bold;opacity:.9">Dni robocze</div>
<div class="a" style="left:593px;top:496px;font-size:24px;color:#4b5260;white-space:nowrap">20</div>
<div class="a" style="left:892px;top:461px;width:290px;height:78px;background:#eff3fc;border-radius:13px;box-shadow:0 2px 8px rgba(40,50,90,.14),0 0 1px rgba(40,50,90,.2)"></div>
<div class="a" style="left:908px;top:477px;font-size:14.5px;color:#5b6270;white-space:nowrap;font-weight:bold;opacity:.9">Przypisania</div>
<div class="a" style="left:907px;top:496px;font-size:24px;color:#4b5260;white-space:nowrap">135</div>
<div class="a" style="left:1206px;top:461px;width:290px;height:78px;background:#eff3fc;border-radius:13px;box-shadow:0 2px 8px rgba(40,50,90,.14),0 0 1px rgba(40,50,90,.2)"></div>
<div class="a" style="left:1222px;top:477px;font-size:14.5px;color:#5b6270;white-space:nowrap;font-weight:bold;opacity:.9">Pracownicy</div>
<div class="a" style="left:1221px;top:496px;font-size:24px;color:#4b5260;white-space:nowrap">7</div>
<div class="a" style="left:1520px;top:461px;width:290px;height:78px;background:#eff3fc;border-radius:13px;box-shadow:0 2px 8px rgba(40,50,90,.14),0 0 1px rgba(40,50,90,.2)"></div>
<div class="a" style="left:1536px;top:477px;font-size:14.5px;color:#5b6270;white-space:nowrap;font-weight:bold;opacity:.9">Problemy</div>
<div class="a" style="left:1535px;top:496px;font-size:24px;color:#e03131;white-space:nowrap">5</div>
<div class="a" style="left:578px;top:579px;width:1231px;height:489px;overflow:hidden">
<div class="a" style="left:196.5px;top:0;width:88.55px;height:53px;background:#e3e7ef"></div>
<div class="a" style="left:727.8px;top:0;width:88.55px;height:53px;background:#e3e7ef"></div>
<div class="a" style="left:816.3px;top:0;width:88.55px;height:53px;background:#e3e7ef"></div>
<div class="a" style="left:12px;top:9px;font-size:14.5px;font-weight:bold;color:#4a5060;opacity:.92;white-space:nowrap">Pracownik</div>
<div class="a" style="left:196.5px;top:9px;width:88.55px;text-align:center;font-size:15px;font-weight:bold;color:#4a5060;opacity:.92">1</div>
<div class="a" style="left:196.5px;top:31px;width:88.55px;text-align:center;font-size:11px;font-weight:bold;color:#555b66;opacity:.9">NIEDZ.</div>
<div class="a" style="left:285.0px;top:9px;width:88.55px;text-align:center;font-size:15px;font-weight:bold;color:#4a5060;opacity:.92">2</div>
<div class="a" style="left:285.0px;top:31px;width:88.55px;text-align:center;font-size:11px;font-weight:bold;color:#555b66;opacity:.9">PON.</div>
<div class="a" style="left:373.6px;top:9px;width:88.55px;text-align:center;font-size:15px;font-weight:bold;color:#4a5060;opacity:.92">3</div>
<div class="a" style="left:373.6px;top:31px;width:88.55px;text-align:center;font-size:11px;font-weight:bold;color:#555b66;opacity:.9">WT.</div>
<div class="a" style="left:462.2px;top:9px;width:88.55px;text-align:center;font-size:15px;font-weight:bold;color:#4a5060;opacity:.92">4</div>
<div class="a" style="left:462.2px;top:31px;width:88.55px;text-align:center;font-size:11px;font-weight:bold;color:#555b66;opacity:.9">ŚR.</div>
<div class="a" style="left:550.7px;top:9px;width:88.55px;text-align:center;font-size:15px;font-weight:bold;color:#4a5060;opacity:.92">5</div>
<div class="a" style="left:550.7px;top:31px;width:88.55px;text-align:center;font-size:11px;font-weight:bold;color:#555b66;opacity:.9">CZW.</div>
<div class="a" style="left:639.2px;top:9px;width:88.55px;text-align:center;font-size:15px;font-weight:bold;color:#4a5060;opacity:.92">6</div>
<div class="a" style="left:639.2px;top:31px;width:88.55px;text-align:center;font-size:11px;font-weight:bold;color:#555b66;opacity:.9">PT.</div>
<div class="a" style="left:727.8px;top:9px;width:88.55px;text-align:center;font-size:15px;font-weight:bold;color:#4a5060;opacity:.92">7</div>
<div class="a" style="left:727.8px;top:31px;width:88.55px;text-align:center;font-size:11px;font-weight:bold;color:#555b66;opacity:.9">SOB.</div>
<div class="a" style="left:816.3px;top:9px;width:88.55px;text-align:center;font-size:15px;font-weight:bold;color:#4a5060;opacity:.92">8</div>
<div class="a" style="left:816.3px;top:31px;width:88.55px;text-align:center;font-size:11px;font-weight:bold;color:#555b66;opacity:.9">NIEDZ.</div>
<div class="a" style="left:904.9px;top:9px;width:88.55px;text-align:center;font-size:15px;font-weight:bold;color:#4a5060;opacity:.92">9</div>
<div class="a" style="left:904.9px;top:31px;width:88.55px;text-align:center;font-size:11px;font-weight:bold;color:#555b66;opacity:.9">PON.</div>
<div class="a" style="left:993.4px;top:9px;width:88.55px;text-align:center;font-size:15px;font-weight:bold;color:#4a5060;opacity:.92">10</div>
<div class="a" style="left:993.4px;top:31px;width:88.55px;text-align:center;font-size:11px;font-weight:bold;color:#555b66;opacity:.9">WT.</div>
<div class="a" style="left:1082.0px;top:9px;width:88.55px;text-align:center;font-size:15px;font-weight:bold;color:#4a5060;opacity:.92">11</div>
<div class="a" style="left:1082.0px;top:31px;width:88.55px;text-align:center;font-size:11px;font-weight:bold;color:#555b66;opacity:.9">ŚR.</div>
<div class="a" style="left:1170.5px;top:9px;width:88.55px;text-align:center;font-size:15px;font-weight:bold;color:#4a5060;opacity:.92">12</div>
<div class="a" style="left:1170.5px;top:31px;width:88.55px;text-align:center;font-size:11px;font-weight:bold;color:#555b66;opacity:.9">CZW.</div>
<div class="a" style="left:0;top:52px;width:1231px;height:2px;background:#cdd1da"></div>
<div class="a" style="left:0;top:53px;width:1231px;height:38px;background:#e1e5ee"></div>
<div class="a" style="left:196.5px;top:53px;width:88.55px;height:38px;background:#d6dae3"></div>
<div class="a" style="left:727.8px;top:53px;width:88.55px;height:38px;background:#d6dae3"></div>
<div class="a" style="left:816.3px;top:53px;width:88.55px;height:38px;background:#d6dae3"></div>
<div class="a" style="left:12px;top:67px;width:11px;height:11px;background:#6b7280;border-radius:2px"></div>
<div class="a" style="left:31px;top:63.5px;font-size:14.5px;font-weight:bold;color:#4a5060;white-space:nowrap;letter-spacing:0.4px">Robak<span style="font-weight:normal;color:#6b7280;margin-left:9px;font-size:15px;letter-spacing:1px">(3)</span></div>
<div class="a" style="left:0;top:90.5px;width:1231px;height:2px;background:#cdd1da;z-index:2"></div>
<div class="a" style="left:0;top:91px;width:1231px;height:41px;background:#eff3fc"></div>
<div class="a" style="left:199.5px;top:91px;width:88.55px;height:41px;background:#e4e8f0"></div>
<div class="a" style="left:730.8px;top:91px;width:88.55px;height:41px;background:#e4e8f0"></div>
<div class="a" style="left:819.3px;top:91px;width:88.55px;height:41px;background:#e4e8f0"></div>
<div class="a" style="left:0;top:91px;width:3px;height:41px;background:#6b7280"></div>
<svg style="left:14px;top:100px" width="24" height="24" viewBox="0 0 24 24"><defs><clipPath id="cm100"><circle cx="12" cy="12" r="12"/></clipPath></defs><g clip-path="url(#cm100)"><rect width="24" height="24" fill="#d9f3f7"/><path d="M3 25q1-7 9-7.5q8 .5 9 7.5z" fill="#1fb39c"/><rect x="10" y="14" width="4" height="4.5" fill="#f2c4a6"/><ellipse cx="12" cy="10.5" rx="4.3" ry="5" fill="#f6cdb0"/><path d="M7.5 9q-.5-5.5 4.5-5.5t4.5 5.5q-1-2.5-4.5-2.5t-4.5 2.5z" fill="#3a2a20"/></g></svg>
<div class="a" style="left:46px;top:102px;font-size:15px;color:#4b5260;white-space:nowrap;letter-spacing:.3px">asd asd</div>
<div class="a" style="left:272.3px;top:101px;width:120px;text-align:center"><span style="display:inline-block;height:22px;line-height:20px;padding:0 6px;letter-spacing:0.2px;background:#fcc513;border:1px solid #e9b10c;border-radius:4px;font-size:11.5px;font-weight:bold;color:#13204a;white-space:nowrap"><svg width="10" height="9" viewBox="0 0 10 9" style="position:relative;display:inline-block;vertical-align:0;margin-right:3px"><path d="M1.2 8.6V1.4L5.6 .3v8.3z" fill="#22a845"/><path d="M0 8.4h5.8v.6H0z" fill="#22a845"/><path d="M5.6 1.1l2.6.7.4 7" fill="none" stroke="#5bb040" stroke-width="1.1" stroke-linejoin="round"/><circle cx="4" cy="4.8" r=".45" fill="#7cc060"/></svg>6:30-14:30</span></div>
<div class="a" style="left:360.9px;top:101px;width:120px;text-align:center"><span style="display:inline-block;height:22px;line-height:20px;padding:0 6px;letter-spacing:0.2px;background:#fcc513;border:1px solid #e9b10c;border-radius:4px;font-size:11.5px;font-weight:bold;color:#13204a;white-space:nowrap"><svg width="10" height="9" viewBox="0 0 10 9" style="position:relative;display:inline-block;vertical-align:0;margin-right:3px"><path d="M1.2 8.6V1.4L5.6 .3v8.3z" fill="#22a845"/><path d="M0 8.4h5.8v.6H0z" fill="#22a845"/><path d="M5.6 1.1l2.6.7.4 7" fill="none" stroke="#5bb040" stroke-width="1.1" stroke-linejoin="round"/><circle cx="4" cy="4.8" r=".45" fill="#7cc060"/></svg>6:30-14:30</span></div>
<div class="a" style="left:449.4px;top:101px;width:120px;text-align:center"><span style="display:inline-block;height:22px;line-height:20px;padding:0 6px;letter-spacing:0.2px;background:#fcc513;border:1px solid #e9b10c;border-radius:4px;font-size:11.5px;font-weight:bold;color:#13204a;white-space:nowrap">9:30-17:30<svg width="10" height="9" viewBox="0 0 10 9" style="position:relative;display:inline-block;vertical-align:0;margin-left:3px"><path d="M2 8V1.2a.6.6 0 0 1 .6-.6h4.8a.6.6 0 0 1 .6.6V8z" fill="#e0304c"/><rect x=".3" y="7.8" width="9.4" height="1.2" fill="#e4404a"/><circle cx="6.4" cy="4.6" r=".55" fill="#f08a40"/></svg></span></div>
<div class="a" style="left:538.0px;top:101px;width:120px;text-align:center"><span style="display:inline-block;height:22px;line-height:20px;padding:0 6px;letter-spacing:0.2px;background:#fcc513;border:1px solid #e9b10c;border-radius:4px;font-size:11.5px;font-weight:bold;color:#13204a;white-space:nowrap"><svg width="10" height="9" viewBox="0 0 10 9" style="position:relative;display:inline-block;vertical-align:0;margin-right:3px"><path d="M1.2 8.6V1.4L5.6 .3v8.3z" fill="#22a845"/><path d="M0 8.4h5.8v.6H0z" fill="#22a845"/><path d="M5.6 1.1l2.6.7.4 7" fill="none" stroke="#5bb040" stroke-width="1.1" stroke-linejoin="round"/><circle cx="4" cy="4.8" r=".45" fill="#7cc060"/></svg>6:30-14:30</span></div>
<div class="a" style="left:626.5px;top:101px;width:120px;text-align:center"><span style="display:inline-block;height:22px;line-height:20px;padding:0 6px;letter-spacing:0.2px;background:#fcc513;border:1px solid #e9b10c;border-radius:4px;font-size:11.5px;font-weight:bold;color:#13204a;white-space:nowrap">7:00-15:00</span></div>
<div class="a" style="left:892.2px;top:101px;width:120px;text-align:center"><span style="display:inline-block;height:22px;line-height:20px;padding:0 6px;letter-spacing:0.2px;background:#fcc513;border:1px solid #e9b10c;border-radius:4px;font-size:11.5px;font-weight:bold;color:#13204a;white-space:nowrap">7:00-15:00</span></div>
<div class="a" style="left:980.7px;top:101px;width:120px;text-align:center"><span style="display:inline-block;height:22px;line-height:20px;padding:0 6px;letter-spacing:0.2px;background:#fcc513;border:1px solid #e9b10c;border-radius:4px;font-size:11.5px;font-weight:bold;color:#13204a;white-space:nowrap">7:00-15:00</span></div>
<div class="a" style="left:1069.3px;top:101px;width:120px;text-align:center"><span style="display:inline-block;height:22px;line-height:20px;padding:0 6px;letter-spacing:0.2px;background:#fcc513;border:1px solid #e9b10c;border-radius:4px;font-size:11.5px;font-weight:bold;color:#13204a;white-space:nowrap">9:30-17:30<svg width="10" height="9" viewBox="0 0 10 9" style="position:relative;display:inline-block;vertical-align:0;margin-left:3px"><path d="M2 8V1.2a.6.6 0 0 1 .6-.6h4.8a.6.6 0 0 1 .6.6V8z" fill="#e0304c"/><rect x=".3" y="7.8" width="9.4" height="1.2" fill="#e4404a"/><circle cx="6.4" cy="4.6" r=".55" fill="#f08a40"/></svg></span></div>
<div class="a" style="left:1157.8px;top:101px;width:120px;text-align:center"><span style="display:inline-block;height:22px;line-height:20px;padding:0 6px;letter-spacing:0.2px;background:#fcc513;border:1px solid #e9b10c;border-radius:4px;font-size:11.5px;font-weight:bold;color:#13204a;white-space:nowrap">9:30-17:30<svg width="10" height="9" viewBox="0 0 10 9" style="position:relative;display:inline-block;vertical-align:0;margin-left:3px"><path d="M2 8V1.2a.6.6 0 0 1 .6-.6h4.8a.6.6 0 0 1 .6.6V8z" fill="#e0304c"/><rect x=".3" y="7.8" width="9.4" height="1.2" fill="#e4404a"/><circle cx="6.4" cy="4.6" r=".55" fill="#f08a40"/></svg></span></div>
<div class="a" style="left:3px;top:131.5px;width:1231px;height:1.5px;background:#d3d7e0;z-index:2"></div>
<div class="a" style="left:0;top:132px;width:1231px;height:41px;background:#eff3fc"></div>
<div class="a" style="left:199.5px;top:132px;width:88.55px;height:41px;background:#e4e8f0"></div>
<div class="a" style="left:730.8px;top:132px;width:88.55px;height:41px;background:#e4e8f0"></div>
<div class="a" style="left:819.3px;top:132px;width:88.55px;height:41px;background:#e4e8f0"></div>
<div class="a" style="left:0;top:132px;width:3px;height:41px;background:#6b7280"></div>
<svg style="left:14px;top:141px" width="24" height="24" viewBox="0 0 24 24"><defs><clipPath id="cm141"><circle cx="12" cy="12" r="12"/></clipPath></defs><g clip-path="url(#cm141)"><rect width="24" height="24" fill="#d9f3f7"/><path d="M3 25q1-7 9-7.5q8 .5 9 7.5z" fill="#1fb39c"/><rect x="10" y="14" width="4" height="4.5" fill="#f2c4a6"/><ellipse cx="12" cy="10.5" rx="4.3" ry="5" fill="#f6cdb0"/><path d="M7.5 9q-.5-5.5 4.5-5.5t4.5 5.5q-1-2.5-4.5-2.5t-4.5 2.5z" fill="#3a2a20"/></g></svg>
<div class="a" style="left:46px;top:143px;font-size:15px;color:#4b5260;white-space:nowrap;letter-spacing:.3px">Test2 Test</div>
<div class="a" style="left:272.3px;top:142px;width:120px;text-align:center"><span style="display:inline-block;height:22px;line-height:20px;padding:0 6px;letter-spacing:0.2px;background:#fcc513;border:1px solid #e9b10c;border-radius:4px;font-size:11.5px;font-weight:bold;color:#13204a;white-space:nowrap">9:30-17:30<svg width="10" height="9" viewBox="0 0 10 9" style="position:relative;display:inline-block;vertical-align:0;margin-left:3px"><path d="M2 8V1.2a.6.6 0 0 1 .6-.6h4.8a.6.6 0 0 1 .6.6V8z" fill="#e0304c"/><rect x=".3" y="7.8" width="9.4" height="1.2" fill="#e4404a"/><circle cx="6.4" cy="4.6" r=".55" fill="#f08a40"/></svg></span></div>
<div class="a" style="left:360.9px;top:142px;width:120px;text-align:center"><span style="display:inline-block;height:22px;line-height:20px;padding:0 6px;letter-spacing:0.2px;background:#fcc513;border:1px solid #e9b10c;border-radius:4px;font-size:11.5px;font-weight:bold;color:#13204a;white-space:nowrap">9:30-17:30<svg width="10" height="9" viewBox="0 0 10 9" style="position:relative;display:inline-block;vertical-align:0;margin-left:3px"><path d="M2 8V1.2a.6.6 0 0 1 .6-.6h4.8a.6.6 0 0 1 .6.6V8z" fill="#e0304c"/><rect x=".3" y="7.8" width="9.4" height="1.2" fill="#e4404a"/><circle cx="6.4" cy="4.6" r=".55" fill="#f08a40"/></svg></span></div>
<div class="a" style="left:449.4px;top:142px;width:120px;text-align:center"><span style="display:inline-block;height:22px;line-height:20px;padding:0 6px;letter-spacing:0.2px;background:#fcc513;border:1px solid #e9b10c;border-radius:4px;font-size:11.5px;font-weight:bold;color:#13204a;white-space:nowrap">7:30-15:30</span></div>
<div class="a" style="left:538.0px;top:142px;width:120px;text-align:center"><span style="display:inline-block;height:22px;line-height:20px;padding:0 6px;letter-spacing:0.2px;background:#fcc513;border:1px solid #e9b10c;border-radius:4px;font-size:11.5px;font-weight:bold;color:#13204a;white-space:nowrap">7:00-15:00</span></div>
<div class="a" style="left:626.5px;top:142px;width:120px;text-align:center"><span style="display:inline-block;height:22px;line-height:20px;padding:0 6px;letter-spacing:0.2px;background:#fcc513;border:1px solid #e9b10c;border-radius:4px;font-size:11.5px;font-weight:bold;color:#13204a;white-space:nowrap"><svg width="10" height="9" viewBox="0 0 10 9" style="position:relative;display:inline-block;vertical-align:0;margin-right:3px"><path d="M1.2 8.6V1.4L5.6 .3v8.3z" fill="#22a845"/><path d="M0 8.4h5.8v.6H0z" fill="#22a845"/><path d="M5.6 1.1l2.6.7.4 7" fill="none" stroke="#5bb040" stroke-width="1.1" stroke-linejoin="round"/><circle cx="4" cy="4.8" r=".45" fill="#7cc060"/></svg>6:30-14:30</span></div>
<div class="a" style="left:892.2px;top:142px;width:120px;text-align:center"><span style="display:inline-block;height:22px;line-height:20px;padding:0 6px;letter-spacing:0.2px;background:#fcc513;border:1px solid #e9b10c;border-radius:4px;font-size:11.5px;font-weight:bold;color:#13204a;white-space:nowrap"><svg width="10" height="9" viewBox="0 0 10 9" style="position:relative;display:inline-block;vertical-align:0;margin-right:3px"><path d="M1.2 8.6V1.4L5.6 .3v8.3z" fill="#22a845"/><path d="M0 8.4h5.8v.6H0z" fill="#22a845"/><path d="M5.6 1.1l2.6.7.4 7" fill="none" stroke="#5bb040" stroke-width="1.1" stroke-linejoin="round"/><circle cx="4" cy="4.8" r=".45" fill="#7cc060"/></svg>6:30-14:30</span></div>
<div class="a" style="left:980.7px;top:142px;width:120px;text-align:center"><span style="display:inline-block;height:22px;line-height:20px;padding:0 6px;letter-spacing:0.2px;background:#fcc513;border:1px solid #e9b10c;border-radius:4px;font-size:11.5px;font-weight:bold;color:#13204a;white-space:nowrap">9:30-17:30<svg width="10" height="9" viewBox="0 0 10 9" style="position:relative;display:inline-block;vertical-align:0;margin-left:3px"><path d="M2 8V1.2a.6.6 0 0 1 .6-.6h4.8a.6.6 0 0 1 .6.6V8z" fill="#e0304c"/><rect x=".3" y="7.8" width="9.4" height="1.2" fill="#e4404a"/><circle cx="6.4" cy="4.6" r=".55" fill="#f08a40"/></svg></span></div>
<div class="a" style="left:1069.3px;top:142px;width:120px;text-align:center"><span style="display:inline-block;height:22px;line-height:20px;padding:0 6px;letter-spacing:0.2px;background:#fcc513;border:1px solid #e9b10c;border-radius:4px;font-size:11.5px;font-weight:bold;color:#13204a;white-space:nowrap"><svg width="10" height="9" viewBox="0 0 10 9" style="position:relative;display:inline-block;vertical-align:0;margin-right:3px"><path d="M1.2 8.6V1.4L5.6 .3v8.3z" fill="#22a845"/><path d="M0 8.4h5.8v.6H0z" fill="#22a845"/><path d="M5.6 1.1l2.6.7.4 7" fill="none" stroke="#5bb040" stroke-width="1.1" stroke-linejoin="round"/><circle cx="4" cy="4.8" r=".45" fill="#7cc060"/></svg>6:30-14:30</span></div>
<div class="a" style="left:1157.8px;top:142px;width:120px;text-align:center"><span style="display:inline-block;height:22px;line-height:20px;padding:0 6px;letter-spacing:0.2px;background:#fcc513;border:1px solid #e9b10c;border-radius:4px;font-size:11.5px;font-weight:bold;color:#13204a;white-space:nowrap"><svg width="10" height="9" viewBox="0 0 10 9" style="position:relative;display:inline-block;vertical-align:0;margin-right:3px"><path d="M1.2 8.6V1.4L5.6 .3v8.3z" fill="#22a845"/><path d="M0 8.4h5.8v.6H0z" fill="#22a845"/><path d="M5.6 1.1l2.6.7.4 7" fill="none" stroke="#5bb040" stroke-width="1.1" stroke-linejoin="round"/><circle cx="4" cy="4.8" r=".45" fill="#7cc060"/></svg>6:30-14:30</span></div>
<div class="a" style="left:3px;top:172.5px;width:1231px;height:1.5px;background:#d3d7e0;z-index:2"></div>
<div class="a" style="left:0;top:173px;width:1231px;height:41px;background:#eff3fc"></div>
<div class="a" style="left:199.5px;top:173px;width:88.55px;height:41px;background:#e4e8f0"></div>
<div class="a" style="left:730.8px;top:173px;width:88.55px;height:41px;background:#e4e8f0"></div>
<div class="a" style="left:819.3px;top:173px;width:88.55px;height:41px;background:#e4e8f0"></div>
<div class="a" style="left:0;top:173px;width:3px;height:41px;background:#6b7280"></div>
<svg style="left:14px;top:182px" width="24" height="24" viewBox="0 0 24 24"><defs><clipPath id="cw182"><circle cx="12" cy="12" r="12"/></clipPath></defs><g clip-path="url(#cw182)"><rect width="24" height="24" fill="#f6e6f6"/><path d="M6.5 10q-1 7 1.5 9h8q2.5-2 1.5-9z" fill="#2a1a18"/><path d="M3 25q1-7 9-7.5q8 .5 9 7.5z" fill="#8a3fc8"/><ellipse cx="12" cy="11" rx="4" ry="4.7" fill="#f6cdb0"/><path d="M7.5 10q0-6 4.5-6t4.5 6q-2-3-4.5-3t-4.5 3z" fill="#2a1a18"/><circle cx="10.3" cy="11" r="1.3" fill="none" stroke="#c77ab8" stroke-width=".6"/><circle cx="13.7" cy="11" r="1.3" fill="none" stroke="#c77ab8" stroke-width=".6"/></g></svg>
<div class="a" style="left:46px;top:184px;font-size:15px;color:#4b5260;white-space:nowrap;letter-spacing:.3px">Test3 Test</div>
<div class="a" style="left:272.3px;top:183px;width:120px;text-align:center"><span style="display:inline-block;height:22px;line-height:20px;padding:0 6px;letter-spacing:0.2px;background:#fcc513;border:1px solid #e9b10c;border-radius:4px;font-size:11.5px;font-weight:bold;color:#13204a;white-space:nowrap">7:00-15:00</span></div>
<div class="a" style="left:360.9px;top:183px;width:120px;text-align:center"><span style="display:inline-block;height:22px;line-height:20px;padding:0 6px;letter-spacing:0.2px;background:#fcc513;border:1px solid #e9b10c;border-radius:4px;font-size:11.5px;font-weight:bold;color:#13204a;white-space:nowrap">7:00-15:00</span></div>
<div class="a" style="left:449.4px;top:183px;width:120px;text-align:center"><span style="display:inline-block;height:22px;line-height:20px;padding:0 6px;letter-spacing:0.2px;background:#fcc513;border:1px solid #e9b10c;border-radius:4px;font-size:11.5px;font-weight:bold;color:#13204a;white-space:nowrap"><svg width="10" height="9" viewBox="0 0 10 9" style="position:relative;display:inline-block;vertical-align:0;margin-right:3px"><path d="M1.2 8.6V1.4L5.6 .3v8.3z" fill="#22a845"/><path d="M0 8.4h5.8v.6H0z" fill="#22a845"/><path d="M5.6 1.1l2.6.7.4 7" fill="none" stroke="#5bb040" stroke-width="1.1" stroke-linejoin="round"/><circle cx="4" cy="4.8" r=".45" fill="#7cc060"/></svg>6:30-14:30</span></div>
<div class="a" style="left:538.0px;top:183px;width:120px;text-align:center"><span style="display:inline-block;height:22px;line-height:20px;padding:0 6px;letter-spacing:0.2px;background:#fcc513;border:1px solid #e9b10c;border-radius:4px;font-size:11.5px;font-weight:bold;color:#13204a;white-space:nowrap">9:30-17:30<svg width="10" height="9" viewBox="0 0 10 9" style="position:relative;display:inline-block;vertical-align:0;margin-left:3px"><path d="M2 8V1.2a.6.6 0 0 1 .6-.6h4.8a.6.6 0 0 1 .6.6V8z" fill="#e0304c"/><rect x=".3" y="7.8" width="9.4" height="1.2" fill="#e4404a"/><circle cx="6.4" cy="4.6" r=".55" fill="#f08a40"/></svg></span></div>
<div class="a" style="left:626.5px;top:183px;width:120px;text-align:center"><span style="display:inline-block;height:22px;line-height:20px;padding:0 6px;letter-spacing:0.2px;background:#fcc513;border:1px solid #e9b10c;border-radius:4px;font-size:11.5px;font-weight:bold;color:#13204a;white-space:nowrap">9:30-17:30<svg width="10" height="9" viewBox="0 0 10 9" style="position:relative;display:inline-block;vertical-align:0;margin-left:3px"><path d="M2 8V1.2a.6.6 0 0 1 .6-.6h4.8a.6.6 0 0 1 .6.6V8z" fill="#e0304c"/><rect x=".3" y="7.8" width="9.4" height="1.2" fill="#e4404a"/><circle cx="6.4" cy="4.6" r=".55" fill="#f08a40"/></svg></span></div>
<div class="a" style="left:892.2px;top:183px;width:120px;text-align:center"><span style="display:inline-block;height:22px;line-height:20px;padding:0 6px;letter-spacing:0.2px;background:#fcc513;border:1px solid #e9b10c;border-radius:4px;font-size:11.5px;font-weight:bold;color:#13204a;white-space:nowrap">9:30-17:30<svg width="10" height="9" viewBox="0 0 10 9" style="position:relative;display:inline-block;vertical-align:0;margin-left:3px"><path d="M2 8V1.2a.6.6 0 0 1 .6-.6h4.8a.6.6 0 0 1 .6.6V8z" fill="#e0304c"/><rect x=".3" y="7.8" width="9.4" height="1.2" fill="#e4404a"/><circle cx="6.4" cy="4.6" r=".55" fill="#f08a40"/></svg></span></div>
<div class="a" style="left:980.7px;top:183px;width:120px;text-align:center"><span style="display:inline-block;height:22px;line-height:20px;padding:0 6px;letter-spacing:0.2px;background:#fcc513;border:1px solid #e9b10c;border-radius:4px;font-size:11.5px;font-weight:bold;color:#13204a;white-space:nowrap"><svg width="10" height="9" viewBox="0 0 10 9" style="position:relative;display:inline-block;vertical-align:0;margin-right:3px"><path d="M1.2 8.6V1.4L5.6 .3v8.3z" fill="#22a845"/><path d="M0 8.4h5.8v.6H0z" fill="#22a845"/><path d="M5.6 1.1l2.6.7.4 7" fill="none" stroke="#5bb040" stroke-width="1.1" stroke-linejoin="round"/><circle cx="4" cy="4.8" r=".45" fill="#7cc060"/></svg>6:30-14:30</span></div>
<div class="a" style="left:1069.3px;top:183px;width:120px;text-align:center"><span style="display:inline-block;height:22px;line-height:20px;padding:0 6px;letter-spacing:0.2px;background:#fcc513;border:1px solid #e9b10c;border-radius:4px;font-size:11.5px;font-weight:bold;color:#13204a;white-space:nowrap">7:30-15:30</span></div>
<div class="a" style="left:1157.8px;top:183px;width:120px;text-align:center"><span style="display:inline-block;height:22px;line-height:20px;padding:0 6px;letter-spacing:0.2px;background:#fcc513;border:1px solid #e9b10c;border-radius:4px;font-size:11.5px;font-weight:bold;color:#13204a;white-space:nowrap">7:30-15:30</span></div>
<div class="a" style="left:0;top:214px;width:1231px;height:37px;background:#e7ebf4"></div>
<div class="a" style="left:199.5px;top:214px;width:88.55px;height:37px;background:#dce0e9"></div>
<div class="a" style="left:730.8px;top:214px;width:88.55px;height:37px;background:#dce0e9"></div>
<div class="a" style="left:819.3px;top:214px;width:88.55px;height:37px;background:#dce0e9"></div>
<div class="a" style="left:3px;top:213px;width:1231px;height:0;border-top:1px dashed #c3c8d2;z-index:2"></div>
<div class="a" style="left:0;top:214px;width:3px;height:37px;background:#6b7280"></div>
<div class="a" style="left:15px;top:227px;font-size:11px;color:#6b7280;white-space:nowrap">Pokrycie</div>
<div class="a" style="left:288.3px;top:222px;width:88px;text-align:center;font-size:10.5px;color:#6b7280;white-space:nowrap;line-height:11px;letter-spacing:0.4px">06:30-17:30<br><span style="font-weight:bold;color:#4b5260;font-size:11px">3</span></div>
<div class="a" style="left:376.9px;top:222px;width:88px;text-align:center;font-size:10.5px;color:#6b7280;white-space:nowrap;line-height:11px;letter-spacing:0.4px">06:30-17:30<br><span style="font-weight:bold;color:#4b5260;font-size:11px">3</span></div>
<div class="a" style="left:465.4px;top:222px;width:88px;text-align:center;font-size:10.5px;color:#6b7280;white-space:nowrap;line-height:11px;letter-spacing:0.4px">06:30-17:30<br><span style="font-weight:bold;color:#4b5260;font-size:11px">3</span></div>
<div class="a" style="left:554.0px;top:222px;width:88px;text-align:center;font-size:10.5px;color:#6b7280;white-space:nowrap;line-height:11px;letter-spacing:0.4px">06:30-17:30<br><span style="font-weight:bold;color:#4b5260;font-size:11px">3</span></div>
<div class="a" style="left:642.5px;top:222px;width:88px;text-align:center;font-size:10.5px;color:#6b7280;white-space:nowrap;line-height:11px;letter-spacing:0.4px">06:30-17:30<br><span style="font-weight:bold;color:#4b5260;font-size:11px">3</span></div>
<div class="a" style="left:908.2px;top:222px;width:88px;text-align:center;font-size:10.5px;color:#6b7280;white-space:nowrap;line-height:11px;letter-spacing:0.4px">06:30-17:30<br><span style="font-weight:bold;color:#4b5260;font-size:11px">3</span></div>
<div class="a" style="left:996.7px;top:222px;width:88px;text-align:center;font-size:10.5px;color:#6b7280;white-space:nowrap;line-height:11px;letter-spacing:0.4px">06:30-17:30<br><span style="font-weight:bold;color:#4b5260;font-size:11px">3</span></div>
<div class="a" style="left:1085.3px;top:222px;width:88px;text-align:center;font-size:10.5px;color:#6b7280;white-space:nowrap;line-height:11px;letter-spacing:0.4px">06:30-17:30<br><span style="font-weight:bold;color:#4b5260;font-size:11px">3</span></div>
<div class="a" style="left:1173.8px;top:222px;width:88px;text-align:center;font-size:10.5px;color:#6b7280;white-space:nowrap;line-height:11px;letter-spacing:0.4px">06:30-17:30<br><span style="font-weight:bold;color:#4b5260;font-size:11px">3</span></div>
<div class="a" style="left:0;top:250.5px;width:1231px;height:1.5px;background:#d3d7e0;z-index:2"></div>
<div class="a" style="left:0;top:251px;width:1231px;height:38px;background:#e1e5ee"></div>
<div class="a" style="left:196.5px;top:251px;width:88.55px;height:38px;background:#d6dae3"></div>
<div class="a" style="left:727.8px;top:251px;width:88.55px;height:38px;background:#d6dae3"></div>
<div class="a" style="left:816.3px;top:251px;width:88.55px;height:38px;background:#d6dae3"></div>
<div class="a" style="left:12px;top:265px;width:11px;height:11px;background:#6b7280;border-radius:2px"></div>
<div class="a" style="left:31px;top:261.5px;font-size:14.5px;font-weight:bold;color:#4a5060;white-space:nowrap;letter-spacing:0.4px">Covid<span style="font-weight:normal;color:#6b7280;margin-left:9px;font-size:15px;letter-spacing:1px">(4)</span></div>
<div class="a" style="left:0;top:288.5px;width:1231px;height:2px;background:#cdd1da;z-index:2"></div>
<div class="a" style="left:1030.7px;top:262px;width:16px;height:16px;border-radius:50%;background:#e8393a;color:#fff;font-size:11px;font-weight:bold;text-align:center;line-height:16px">1</div>
<div class="a" style="left:1119.3px;top:262px;width:16px;height:16px;border-radius:50%;background:#e8393a;color:#fff;font-size:11px;font-weight:bold;text-align:center;line-height:16px">1</div>
<div class="a" style="left:0;top:289px;width:1231px;height:41px;background:#eff3fc"></div>
<div class="a" style="left:199.5px;top:289px;width:88.55px;height:41px;background:#e4e8f0"></div>
<div class="a" style="left:730.8px;top:289px;width:88.55px;height:41px;background:#e4e8f0"></div>
<div class="a" style="left:819.3px;top:289px;width:88.55px;height:41px;background:#e4e8f0"></div>
<div class="a" style="left:0;top:289px;width:3px;height:41px;background:#6b7280"></div>
<svg style="left:14px;top:298px" width="24" height="24" viewBox="0 0 24 24"><defs><clipPath id="cw298"><circle cx="12" cy="12" r="12"/></clipPath></defs><g clip-path="url(#cw298)"><rect width="24" height="24" fill="#f6e6f6"/><path d="M6.5 10q-1 7 1.5 9h8q2.5-2 1.5-9z" fill="#2a1a18"/><path d="M3 25q1-7 9-7.5q8 .5 9 7.5z" fill="#8a3fc8"/><ellipse cx="12" cy="11" rx="4" ry="4.7" fill="#f6cdb0"/><path d="M7.5 10q0-6 4.5-6t4.5 6q-2-3-4.5-3t-4.5 3z" fill="#2a1a18"/><circle cx="10.3" cy="11" r="1.3" fill="none" stroke="#c77ab8" stroke-width=".6"/><circle cx="13.7" cy="11" r="1.3" fill="none" stroke="#c77ab8" stroke-width=".6"/></g></svg>
<div class="a" style="left:46px;top:300px;font-size:15px;color:#4b5260;white-space:nowrap;letter-spacing:.3px">Test nowy</div>
<div class="a" style="left:272.3px;top:299px;width:120px;text-align:center"><span style="display:inline-block;height:22px;line-height:20px;padding:0 6px;letter-spacing:0.2px;background:#fcc513;border:1px solid #e9b10c;border-radius:4px;font-size:11.5px;font-weight:bold;color:#13204a;white-space:nowrap">9:00-17:00</span></div>
<div class="a" style="left:360.9px;top:299px;width:120px;text-align:center"><span style="display:inline-block;height:22px;line-height:20px;padding:0 6px;letter-spacing:0.2px;background:#fcc513;border:1px solid #e9b10c;border-radius:4px;font-size:11.5px;font-weight:bold;color:#13204a;white-space:nowrap">8:30-16:30</span></div>
<div class="a" style="left:449.4px;top:299px;width:120px;text-align:center"><span style="display:inline-block;height:22px;line-height:20px;padding:0 6px;letter-spacing:0.2px;background:#fcc513;border:1px solid #e9b10c;border-radius:4px;font-size:11.5px;font-weight:bold;color:#13204a;white-space:nowrap">8:30-16:30</span></div>
<div class="a" style="left:538.0px;top:299px;width:120px;text-align:center"><span style="display:inline-block;height:22px;line-height:20px;padding:0 6px;letter-spacing:0.2px;background:#fcc513;border:1px solid #e9b10c;border-radius:4px;font-size:11.5px;font-weight:bold;color:#13204a;white-space:nowrap">8:30-16:30</span></div>
<div class="a" style="left:626.5px;top:299px;width:120px;text-align:center"><span style="display:inline-block;height:22px;line-height:20px;padding:0 6px;letter-spacing:0.2px;background:#fcc513;border:1px solid #e9b10c;border-radius:4px;font-size:11.5px;font-weight:bold;color:#13204a;white-space:nowrap">8:30-16:30</span></div>
<div class="a" style="left:892.2px;top:299px;width:120px;text-align:center"><span style="display:inline-block;height:22px;line-height:20px;padding:0 6px;letter-spacing:0.2px;background:#fcc513;border:1px solid #e9b10c;border-radius:4px;font-size:11.5px;font-weight:bold;color:#13204a;white-space:nowrap">8:30-16:30</span></div>
<div class="a" style="left:980.7px;top:299px;width:120px;text-align:center"><span style="display:inline-block;height:22px;line-height:20px;padding:0 6px;letter-spacing:0.2px;background:#fcc513;border:1px solid #e9b10c;border-radius:4px;font-size:11.5px;font-weight:bold;color:#13204a;white-space:nowrap">8:30-16:30</span></div>
<div class="a" style="left:1069.3px;top:299px;width:120px;text-align:center"><span style="display:inline-block;height:22px;line-height:20px;padding:0 6px;letter-spacing:0.2px;background:#fcc513;border:1px solid #e9b10c;border-radius:4px;font-size:11.5px;font-weight:bold;color:#13204a;white-space:nowrap">8:00-16:00</span></div>
<div class="a" style="left:1157.8px;top:299px;width:120px;text-align:center"><span style="display:inline-block;height:22px;line-height:20px;padding:0 6px;letter-spacing:0.2px;background:#fcc513;border:1px solid #e9b10c;border-radius:4px;font-size:11.5px;font-weight:bold;color:#13204a;white-space:nowrap">9:00-17:00</span></div>
<div class="a" style="left:3px;top:329.5px;width:1231px;height:1.5px;background:#d3d7e0;z-index:2"></div>
<div class="a" style="left:0;top:330px;width:1231px;height:40px;background:#eff3fc"></div>
<div class="a" style="left:199.5px;top:330px;width:88.55px;height:40px;background:#e4e8f0"></div>
<div class="a" style="left:730.8px;top:330px;width:88.55px;height:40px;background:#e4e8f0"></div>
<div class="a" style="left:819.3px;top:330px;width:88.55px;height:40px;background:#e4e8f0"></div>
<div class="a" style="left:0;top:330px;width:3px;height:40px;background:#6b7280"></div>
<svg style="left:14px;top:339px" width="24" height="24" viewBox="0 0 24 24"><defs><clipPath id="cp339"><circle cx="12" cy="12" r="12"/></clipPath></defs><g clip-path="url(#cp339)"><rect width="24" height="24" fill="#5a4632"/><rect x="0" y="0" width="10" height="24" fill="#7a6650"/><path d="M0 14l6-2v12H0z" fill="#f0ece6"/><path d="M8 18l10-4 6 4v6H8z" fill="#3a2a1e"/><rect x="14" y="3" width="5" height="8" fill="#8a7660"/></g></svg>
<div class="a" style="left:46px;top:341px;font-size:15px;color:#4b5260;white-space:nowrap;letter-spacing:.3px">Test Test</div>
<div class="a" style="left:115px;top:341px;width:20px;height:18px;background:#1cc0e6;border-radius:4px;color:#fff;font-size:11px;font-weight:bold;text-align:center;line-height:18px">P</div>
<div class="a" style="left:272.3px;top:340px;width:120px;text-align:center"><span style="display:inline-block;height:22px;line-height:20px;padding:0 6px;letter-spacing:0.2px;background:#fcc513;border:1px solid #e9b10c;border-radius:4px;font-size:11.5px;font-weight:bold;color:#13204a;white-space:nowrap">7:00-15:00</span></div>
<div class="a" style="left:360.9px;top:340px;width:120px;text-align:center"><span style="display:inline-block;height:22px;line-height:20px;padding:0 6px;letter-spacing:0.2px;background:#fcc513;border:1px solid #e9b10c;border-radius:4px;font-size:11.5px;font-weight:bold;color:#13204a;white-space:nowrap">8:30-16:30</span></div>
<div class="a" style="left:449.4px;top:340px;width:120px;text-align:center"><span style="display:inline-block;height:22px;line-height:20px;padding:0 6px;letter-spacing:0.2px;background:#fcc513;border:1px solid #e9b10c;border-radius:4px;font-size:11.5px;font-weight:bold;color:#13204a;white-space:nowrap">8:30-16:30</span></div>
<div class="a" style="left:538.0px;top:340px;width:120px;text-align:center"><span style="display:inline-block;height:22px;line-height:20px;padding:0 6px;letter-spacing:0.2px;background:#fcc513;border:1px solid #e9b10c;border-radius:4px;font-size:11.5px;font-weight:bold;color:#13204a;white-space:nowrap">7:00-15:00</span></div>
<div class="a" style="left:626.5px;top:340px;width:120px;text-align:center"><span style="display:inline-block;height:22px;line-height:20px;padding:0 6px;letter-spacing:0.2px;background:#fcc513;border:1px solid #e9b10c;border-radius:4px;font-size:11.5px;font-weight:bold;color:#13204a;white-space:nowrap">8:30-16:30</span></div>
<div class="a" style="left:892.2px;top:340px;width:120px;text-align:center"><span style="display:inline-block;height:22px;line-height:20px;padding:0 6px;letter-spacing:0.2px;background:#fcc513;border:1px solid #e9b10c;border-radius:4px;font-size:11.5px;font-weight:bold;color:#13204a;white-space:nowrap">7:00-15:00</span></div>
<div class="a" style="left:996.4px;top:331px;width:88.55px;height:39px;background:#faf5e4"></div>
<div class="a" style="left:1030.7px;top:340px;width:20px;height:20px;background:#fdf0c6;border-radius:4px;color:#7a5c12;font-size:11px;font-weight:bold;text-align:center;line-height:20px">U</div>
<div class="a" style="left:1157.8px;top:340px;width:120px;text-align:center"><span style="display:inline-block;height:22px;line-height:20px;padding:0 6px;letter-spacing:0.2px;background:#fcc513;border:1px solid #e9b10c;border-radius:4px;font-size:11.5px;font-weight:bold;color:#13204a;white-space:nowrap">7:00-15:00</span></div>
<div class="a" style="left:3px;top:369.5px;width:1231px;height:1.5px;background:#d3d7e0;z-index:2"></div>
<div class="a" style="left:0;top:370px;width:1231px;height:41px;background:#eff3fc"></div>
<div class="a" style="left:199.5px;top:370px;width:88.55px;height:41px;background:#e4e8f0"></div>
<div class="a" style="left:730.8px;top:370px;width:88.55px;height:41px;background:#e4e8f0"></div>
<div class="a" style="left:819.3px;top:370px;width:88.55px;height:41px;background:#e4e8f0"></div>
<div class="a" style="left:0;top:370px;width:3px;height:41px;background:#6b7280"></div>
<svg style="left:14px;top:379px" width="24" height="24" viewBox="0 0 24 24"><defs><clipPath id="cw379"><circle cx="12" cy="12" r="12"/></clipPath></defs><g clip-path="url(#cw379)"><rect width="24" height="24" fill="#f6e6f6"/><path d="M6.5 10q-1 7 1.5 9h8q2.5-2 1.5-9z" fill="#2a1a18"/><path d="M3 25q1-7 9-7.5q8 .5 9 7.5z" fill="#8a3fc8"/><ellipse cx="12" cy="11" rx="4" ry="4.7" fill="#f6cdb0"/><path d="M7.5 10q0-6 4.5-6t4.5 6q-2-3-4.5-3t-4.5 3z" fill="#2a1a18"/><circle cx="10.3" cy="11" r="1.3" fill="none" stroke="#c77ab8" stroke-width=".6"/><circle cx="13.7" cy="11" r="1.3" fill="none" stroke="#c77ab8" stroke-width=".6"/></g></svg>
<div class="a" style="left:46px;top:381px;font-size:15px;color:#4b5260;white-space:nowrap;letter-spacing:.3px">Paweł Wychowawca</div>
<div class="a" style="left:195px;top:381px;width:20px;height:18px;background:#1cc0e6;border-radius:4px;color:#fff;font-size:11px;font-weight:bold;text-align:center;line-height:18px">P</div>
<div class="a" style="left:272.3px;top:380px;width:120px;text-align:center"><span style="display:inline-block;height:22px;line-height:20px;padding:0 6px;letter-spacing:0.2px;background:#fcc513;border:1px solid #e9b10c;border-radius:4px;font-size:11.5px;font-weight:bold;color:#13204a;white-space:nowrap">7:00-15:00</span></div>
<div class="a" style="left:360.9px;top:380px;width:120px;text-align:center"><span style="display:inline-block;height:22px;line-height:20px;padding:0 6px;letter-spacing:0.2px;background:#fcc513;border:1px solid #e9b10c;border-radius:4px;font-size:11.5px;font-weight:bold;color:#13204a;white-space:nowrap">7:00-15:00</span></div>
<div class="a" style="left:449.4px;top:380px;width:120px;text-align:center"><span style="display:inline-block;height:22px;line-height:20px;padding:0 6px;letter-spacing:0.2px;background:#fcc513;border:1px solid #e9b10c;border-radius:4px;font-size:11.5px;font-weight:bold;color:#13204a;white-space:nowrap">7:00-15:00</span></div>
<div class="a" style="left:538.0px;top:380px;width:120px;text-align:center"><span style="display:inline-block;height:22px;line-height:20px;padding:0 6px;letter-spacing:0.2px;background:#fcc513;border:1px solid #e9b10c;border-radius:4px;font-size:11.5px;font-weight:bold;color:#13204a;white-space:nowrap">7:00-15:00</span></div>
<div class="a" style="left:626.5px;top:380px;width:120px;text-align:center"><span style="display:inline-block;height:22px;line-height:20px;padding:0 6px;letter-spacing:0.2px;background:#fcc513;border:1px solid #e9b10c;border-radius:4px;font-size:11.5px;font-weight:bold;color:#13204a;white-space:nowrap">7:00-15:00</span></div>
<div class="a" style="left:892.2px;top:380px;width:120px;text-align:center"><span style="display:inline-block;height:22px;line-height:20px;padding:0 6px;letter-spacing:0.2px;background:#fcc513;border:1px solid #e9b10c;border-radius:4px;font-size:11.5px;font-weight:bold;color:#13204a;white-space:nowrap">7:00-15:00</span></div>
<div class="a" style="left:980.7px;top:380px;width:120px;text-align:center"><span style="display:inline-block;height:22px;line-height:20px;padding:0 6px;letter-spacing:0.2px;background:#fcc513;border:1px solid #e9b10c;border-radius:4px;font-size:11.5px;font-weight:bold;color:#13204a;white-space:nowrap">7:00-15:00</span></div>
<div class="a" style="left:1069.3px;top:380px;width:120px;text-align:center"><span style="display:inline-block;height:22px;line-height:20px;padding:0 6px;letter-spacing:0.2px;background:#fcc513;border:1px solid #e9b10c;border-radius:4px;font-size:11.5px;font-weight:bold;color:#13204a;white-space:nowrap">7:00-15:00</span></div>
<div class="a" style="left:1157.8px;top:380px;width:120px;text-align:center"><span style="display:inline-block;height:22px;line-height:20px;padding:0 6px;letter-spacing:0.2px;background:#fcc513;border:1px solid #e9b10c;border-radius:4px;font-size:11.5px;font-weight:bold;color:#13204a;white-space:nowrap">7:00-15:00</span></div>
<div class="a" style="left:3px;top:410.5px;width:1231px;height:1.5px;background:#d3d7e0;z-index:2"></div>
<div class="a" style="left:0;top:411px;width:1231px;height:41px;background:#eff3fc"></div>
<div class="a" style="left:199.5px;top:411px;width:88.55px;height:41px;background:#e4e8f0"></div>
<div class="a" style="left:730.8px;top:411px;width:88.55px;height:41px;background:#e4e8f0"></div>
<div class="a" style="left:819.3px;top:411px;width:88.55px;height:41px;background:#e4e8f0"></div>
<div class="a" style="left:0;top:411px;width:3px;height:41px;background:#6b7280"></div>
<svg style="left:14px;top:420px" width="24" height="24" viewBox="0 0 24 24"><defs><clipPath id="cw420"><circle cx="12" cy="12" r="12"/></clipPath></defs><g clip-path="url(#cw420)"><rect width="24" height="24" fill="#f6e6f6"/><path d="M6.5 10q-1 7 1.5 9h8q2.5-2 1.5-9z" fill="#2a1a18"/><path d="M3 25q1-7 9-7.5q8 .5 9 7.5z" fill="#8a3fc8"/><ellipse cx="12" cy="11" rx="4" ry="4.7" fill="#f6cdb0"/><path d="M7.5 10q0-6 4.5-6t4.5 6q-2-3-4.5-3t-4.5 3z" fill="#2a1a18"/><circle cx="10.3" cy="11" r="1.3" fill="none" stroke="#c77ab8" stroke-width=".6"/><circle cx="13.7" cy="11" r="1.3" fill="none" stroke="#c77ab8" stroke-width=".6"/></g></svg>
<div class="a" style="left:46px;top:422px;font-size:15px;color:#4b5260;white-space:nowrap;letter-spacing:.3px">Test Wychowawca</div>
<div class="a" style="left:272.3px;top:421px;width:120px;text-align:center"><span style="display:inline-block;height:22px;line-height:20px;padding:0 6px;letter-spacing:0.2px;background:#fcc513;border:1px solid #e9b10c;border-radius:4px;font-size:11.5px;font-weight:bold;color:#13204a;white-space:nowrap">8:30-16:30</span></div>
<div class="a" style="left:360.9px;top:421px;width:120px;text-align:center"><span style="display:inline-block;height:22px;line-height:20px;padding:0 6px;letter-spacing:0.2px;background:#fcc513;border:1px solid #e9b10c;border-radius:4px;font-size:11.5px;font-weight:bold;color:#13204a;white-space:nowrap">8:30-16:30</span></div>
<div class="a" style="left:449.4px;top:421px;width:120px;text-align:center"><span style="display:inline-block;height:22px;line-height:20px;padding:0 6px;letter-spacing:0.2px;background:#fcc513;border:1px solid #e9b10c;border-radius:4px;font-size:11.5px;font-weight:bold;color:#13204a;white-space:nowrap">9:00-17:00</span></div>
<div class="a" style="left:538.0px;top:421px;width:120px;text-align:center"><span style="display:inline-block;height:22px;line-height:20px;padding:0 6px;letter-spacing:0.2px;background:#fcc513;border:1px solid #e9b10c;border-radius:4px;font-size:11.5px;font-weight:bold;color:#13204a;white-space:nowrap">9:00-17:00</span></div>
<div class="a" style="left:626.5px;top:421px;width:120px;text-align:center"><span style="display:inline-block;height:22px;line-height:20px;padding:0 6px;letter-spacing:0.2px;background:#fcc513;border:1px solid #e9b10c;border-radius:4px;font-size:11.5px;font-weight:bold;color:#13204a;white-space:nowrap">8:30-16:30</span></div>
<div class="a" style="left:892.2px;top:421px;width:120px;text-align:center"><span style="display:inline-block;height:22px;line-height:20px;padding:0 6px;letter-spacing:0.2px;background:#fcc513;border:1px solid #e9b10c;border-radius:4px;font-size:11.5px;font-weight:bold;color:#13204a;white-space:nowrap">9:00-17:00</span></div>
<div class="a" style="left:980.7px;top:421px;width:120px;text-align:center"><span style="display:inline-block;height:22px;line-height:20px;padding:0 6px;letter-spacing:0.2px;background:#fcc513;border:1px solid #e9b10c;border-radius:4px;font-size:11.5px;font-weight:bold;color:#13204a;white-space:nowrap">8:30-16:30</span></div>
<div class="a" style="left:1069.3px;top:421px;width:120px;text-align:center"><span style="display:inline-block;height:22px;line-height:20px;padding:0 6px;letter-spacing:0.2px;background:#fcc513;border:1px solid #e9b10c;border-radius:4px;font-size:11.5px;font-weight:bold;color:#13204a;white-space:nowrap">9:00-17:00</span></div>
<div class="a" style="left:1157.8px;top:421px;width:120px;text-align:center"><span style="display:inline-block;height:22px;line-height:20px;padding:0 6px;letter-spacing:0.2px;background:#fcc513;border:1px solid #e9b10c;border-radius:4px;font-size:11.5px;font-weight:bold;color:#13204a;white-space:nowrap">8:30-16:30</span></div>
<div class="a" style="left:0;top:452px;width:1231px;height:37px;background:#e7ebf4"></div>
<div class="a" style="left:199.5px;top:452px;width:88.55px;height:37px;background:#dce0e9"></div>
<div class="a" style="left:730.8px;top:452px;width:88.55px;height:37px;background:#dce0e9"></div>
<div class="a" style="left:819.3px;top:452px;width:88.55px;height:37px;background:#dce0e9"></div>
<div class="a" style="left:996.4px;top:453px;width:89.05px;height:36px;background:#ecdfe7"></div>
<div class="a" style="left:1085.0px;top:453px;width:89.05px;height:36px;background:#ecdfe7"></div>
<div class="a" style="left:3px;top:451px;width:1231px;height:0;border-top:1px dashed #c3c8d2;z-index:2"></div>
<div class="a" style="left:0;top:452px;width:3px;height:37px;background:#6b7280"></div>
<div class="a" style="left:15px;top:465px;font-size:11px;color:#6b7280;white-space:nowrap">Pokrycie</div>
<div class="a" style="left:288.3px;top:460px;width:88px;text-align:center;font-size:10.5px;color:#6b7280;white-space:nowrap;line-height:11px;letter-spacing:0.4px">07:00-17:00<br><span style="font-weight:bold;color:#4b5260;font-size:11px">4<span style="color:#17a2b8;font-weight:bold">(2)</span></span></div>
<div class="a" style="left:376.9px;top:460px;width:88px;text-align:center;font-size:10.5px;color:#6b7280;white-space:nowrap;line-height:11px;letter-spacing:0.4px">07:00-16:30<br><span style="font-weight:bold;color:#4b5260;font-size:11px">4<span style="color:#17a2b8;font-weight:bold">(2)</span></span></div>
<div class="a" style="left:465.4px;top:460px;width:88px;text-align:center;font-size:10.5px;color:#6b7280;white-space:nowrap;line-height:11px;letter-spacing:0.4px">07:00-17:00<br><span style="font-weight:bold;color:#4b5260;font-size:11px">4<span style="color:#17a2b8;font-weight:bold">(2)</span></span></div>
<div class="a" style="left:554.0px;top:460px;width:88px;text-align:center;font-size:10.5px;color:#6b7280;white-space:nowrap;line-height:11px;letter-spacing:0.4px">07:00-17:00<br><span style="font-weight:bold;color:#4b5260;font-size:11px">4<span style="color:#17a2b8;font-weight:bold">(2)</span></span></div>
<div class="a" style="left:642.5px;top:460px;width:88px;text-align:center;font-size:10.5px;color:#6b7280;white-space:nowrap;line-height:11px;letter-spacing:0.4px">07:00-16:30<br><span style="font-weight:bold;color:#4b5260;font-size:11px">4<span style="color:#17a2b8;font-weight:bold">(2)</span></span></div>
<div class="a" style="left:908.2px;top:460px;width:88px;text-align:center;font-size:10.5px;color:#6b7280;white-space:nowrap;line-height:11px;letter-spacing:0.4px">07:00-17:00<br><span style="font-weight:bold;color:#4b5260;font-size:11px">4<span style="color:#17a2b8;font-weight:bold">(2)</span></span></div>
<div class="a" style="left:996.7px;top:460px;width:88px;text-align:center;font-size:10.5px;color:#6b7280;white-space:nowrap;line-height:11px;letter-spacing:0.4px">07:00-16:30<br><span style="font-weight:bold;color:#4b5260;font-size:11px">3<span style="color:#17a2b8;font-weight:bold">(1)</span></span></div>
<div class="a" style="left:1085.3px;top:460px;width:88px;text-align:center;font-size:10.5px;color:#6b7280;white-space:nowrap;line-height:11px;letter-spacing:0.4px">07:00-17:00<br><span style="font-weight:bold;color:#4b5260;font-size:11px">3<span style="color:#17a2b8;font-weight:bold">(1)</span></span></div>
<div class="a" style="left:1173.8px;top:460px;width:88px;text-align:center;font-size:10.5px;color:#6b7280;white-space:nowrap;line-height:11px;letter-spacing:0.4px">07:00-17:00<br><span style="font-weight:bold;color:#4b5260;font-size:11px">4<span style="color:#17a2b8;font-weight:bold">(2)</span></span></div>
</div>
<div class="a" style="left:578px;top:1093px;width:1231px;height:74px;background:#e6eaf3;border-radius:10px"></div>
<div class="a" style="left:593px;top:1103px;font-size:19px;color:#1a2340;white-space:nowrap;letter-spacing:0.5px">Statystyki</div>
<div class="a" style="left:593px;top:1134px;font-size:17px;color:#6b7280;white-space:nowrap">Przypisania:&nbsp; <b style="color:#4b5260">135</b></div>
<div class="a" style="left:745px;top:1134px;font-size:17px;color:#6b7280;white-space:nowrap">Pracownicy:&nbsp; <b style="color:#4b5260">7</b></div>
<div class="a" style="left:881px;top:1134px;font-size:17px;color:#6b7280;white-space:nowrap">Dni robocze:&nbsp; <b style="color:#4b5260">20</b></div>
<div class="a" style="left:1921px;top:1214px;width:51px;height:51px;background:#0b2150;border-radius:13px;box-shadow:0 4px 14px rgba(20,40,100,.25)"></div>
<svg style="left:1934px;top:1229px" width="25" height="21" viewBox="0 0 25 21"><path d="M12.5 2C6.8 2 2.5 5.3 2.5 9.3c0 2.2 1.3 4.1 3.3 5.4L4.5 19l4.6-2.6c1.1.3 2.2.4 3.4.4 5.7 0 10-3.300 10-7.500S18.200 2 12.500 2z" fill="none" stroke="#fff" stroke-width="1.7" stroke-linejoin="round"/><circle cx="8.5" cy="9.3" r="1.2" fill="#fff"/><circle cx="12.5" cy="9.3" r="1.2" fill="#fff"/><circle cx="16.5" cy="9.3" r="1.2" fill="#fff"/></svg>
</body></html>
